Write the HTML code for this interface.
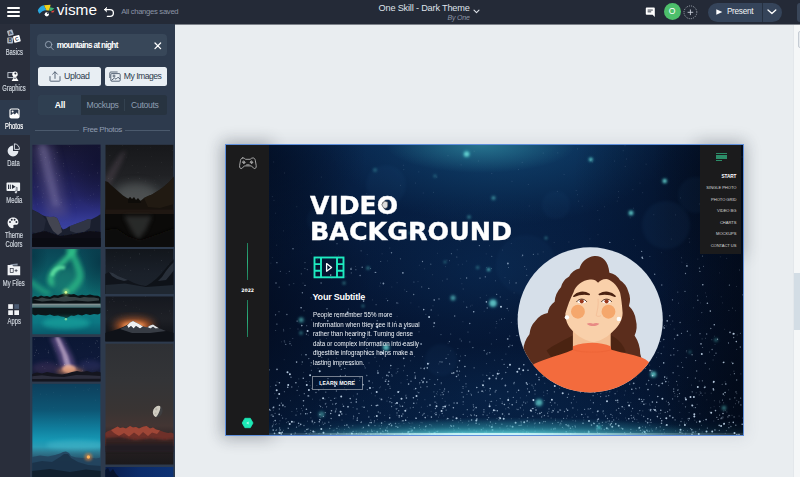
<!DOCTYPE html>
<html lang="en">
<head>
<meta charset="utf-8">
<title>One Skill - Dark Theme</title>
<style>
*{box-sizing:border-box;margin:0;padding:0}
html,body{width:800px;height:477px;overflow:hidden;background:#e9edf0;font-family:"Liberation Sans",sans-serif}
#app{position:relative;width:800px;height:477px;overflow:hidden;background:#e9edf0}
.abs{position:absolute}
/* top bar */
#topbar{position:absolute;left:0;top:0;width:800px;height:25px}
#topbar:before{content:"";position:absolute;left:0;top:0;width:800px;height:24px;background:#242a37}
#topbar .t{position:absolute;white-space:nowrap;line-height:1}
/* sidebar */
#sidebar{position:absolute;left:0;top:24px;width:29.5px;height:453px;background:#292e3b}
.sb{position:absolute;left:-10px;width:48px;text-align:center;-webkit-text-stroke:.2px currentColor;color:#cfd5dd;font-size:9px;line-height:9px}
.sb span{display:inline-block;transform:scaleX(.65);transform-origin:50% 50%;white-space:nowrap}
/* panel */
#panel{position:absolute;left:30px;top:24px;width:145px;height:453px;background:#2d3a4d}
.ph{position:absolute;overflow:hidden;background:#111}
.ph svg{display:block;position:absolute;left:0;top:0;width:100%;height:100%}
/* slide */
#slide{position:absolute;left:225px;top:144px;width:519px;height:292px;background:#05152e;border:1px solid #5f8fdc;box-shadow:0 0 14px 2px rgba(70,80,95,.10);overflow:hidden}
.mn{position:absolute;right:6.6px;font-size:4.1px;line-height:6px;color:#d8d8d8;white-space:nowrap;text-align:right;letter-spacing:-.05px}
</style>
</head>
<body>
<div id="app">

<!-- CANVAS RIGHT STRIP -->
<div class="abs" style="left:793.5px;top:25px;width:7px;height:452px;background:#f5f7f8"></div>
<div class="abs" style="left:793.5px;top:272.5px;width:7px;height:57px;background:#d3dde5"></div>
<div class="abs" style="left:798px;top:30.7px;width:6px;height:17px;border:1px solid #c5ccd4;border-radius:2px;background:#e6eaee"></div>
<div class="abs" style="left:792.5px;top:25px;width:1px;height:452px;background:#e3e7eb"></div>

<!-- SLIDE -->
<div class="abs" style="left:228px;top:148px;width:38px;height:284px;box-shadow:0 0 16px 6px rgba(40,46,58,.30)"></div>
<div class="abs" style="left:703px;top:148px;width:36px;height:102px;box-shadow:0 0 16px 6px rgba(40,46,58,.26)"></div>
<div id="slide">
  <!--SLIDEBG--><svg class="abs" style="left:0;top:0" width="517" height="290" viewBox="0 0 517 290"><defs><filter id="sb1" x="-60%" y="-60%" width="220%" height="220%"><feGaussianBlur stdDeviation=".8"/></filter><filter id="sb2" x="-60%" y="-60%" width="220%" height="220%"><feGaussianBlur stdDeviation="1.6"/></filter><filter id="sb3" x="-60%" y="-60%" width="220%" height="220%"><feGaussianBlur stdDeviation="3"/></filter><filter id="sb8" x="-60%" y="-60%" width="220%" height="220%"><feGaussianBlur stdDeviation="8"/></filter><linearGradient id="sg0" x1="0" y1="0" x2="0" y2="1"><stop offset="0" stop-color="#08244a"/><stop offset=".3" stop-color="#061c3e"/><stop offset=".6" stop-color="#051634"/><stop offset=".85" stop-color="#051938"/><stop offset="1" stop-color="#061e40"/></linearGradient><radialGradient id="sgA" cx=".5" cy=".5" r=".5"><stop offset="0" stop-color="#124a76" stop-opacity="0.8"/><stop offset="1" stop-color="#124a76" stop-opacity="0"/></radialGradient><radialGradient id="sgB" cx=".5" cy=".5" r=".5"><stop offset="0" stop-color="#2a7c94" stop-opacity="0.85"/><stop offset="1" stop-color="#2a7c94" stop-opacity="0"/></radialGradient><radialGradient id="sgC" cx=".5" cy=".5" r=".5"><stop offset="0" stop-color="#0b2f5a" stop-opacity="0.5"/><stop offset="1" stop-color="#0b2f5a" stop-opacity="0"/></radialGradient><radialGradient id="sgD" cx=".5" cy=".5" r=".5"><stop offset="0" stop-color="#020a1c" stop-opacity="0.9"/><stop offset="1" stop-color="#020a1c" stop-opacity="0"/></radialGradient><linearGradient id="sgR" x1="0" y1="0" x2="1" y2="0"><stop offset="0" stop-color="#020814" stop-opacity="0"/><stop offset="1" stop-color="#020814" stop-opacity=".7"/></linearGradient><filter id="sbp" x="0" y="0" width="100%" height="100%" filterUnits="userSpaceOnUse"><feGaussianBlur stdDeviation=".35"/></filter><linearGradient id="sgG" x1="0" y1="0" x2="0" y2="1"><stop offset="0" stop-color="#1f7a90" stop-opacity="0"/><stop offset=".5" stop-color="#258c9e" stop-opacity=".35"/><stop offset=".82" stop-color="#4fbcc8" stop-opacity=".8"/><stop offset="1" stop-color="#a8ecf0" stop-opacity="1"/></linearGradient><linearGradient id="sgGm" x1="0" y1="0" x2="1" y2="0"><stop offset="0" stop-color="#fff" stop-opacity=".06"/><stop offset=".15" stop-color="#fff" stop-opacity=".14"/><stop offset=".3" stop-color="#fff" stop-opacity=".5"/><stop offset=".45" stop-color="#fff" stop-opacity=".95"/><stop offset=".56" stop-color="#fff" stop-opacity="1"/><stop offset=".7" stop-color="#fff" stop-opacity=".6"/><stop offset=".85" stop-color="#fff" stop-opacity=".25"/><stop offset="1" stop-color="#fff" stop-opacity=".1"/></linearGradient><mask id="sgM"><rect x="0" y="268" width="517" height="22" fill="url(#sgGm)"/></mask><radialGradient id="sgE" cx=".5" cy=".5" r=".5"><stop offset="0" stop-color="#3fb4c4" stop-opacity="0.7"/><stop offset="1" stop-color="#3fb4c4" stop-opacity="0"/></radialGradient></defs><rect width="517" height="290" fill="url(#sg0)"/>
<ellipse cx="275" cy="-8" rx="175" ry="88" fill="url(#sgA)"/>
<ellipse cx="255" cy="0" rx="95" ry="28" fill="url(#sgB)"/>
<ellipse cx="260" cy="125" rx="125" ry="75" fill="url(#sgC)"/>
<ellipse cx="270" cy="250" rx="150" ry="50" fill="url(#sgC)" opacity=".7"/>
<ellipse cx="517" cy="40" rx="170" ry="160" fill="url(#sgD)"/>
<ellipse cx="517" cy="260" rx="140" ry="140" fill="url(#sgD)" opacity=".8"/>
<ellipse cx="20" cy="160" rx="125" ry="210" fill="url(#sgD)" opacity=".9"/>
<ellipse cx="25" cy="10" rx="115" ry="110" fill="url(#sgD)" opacity=".85"/>
<rect x="427" y="0" width="90" height="290" fill="url(#sgR)"/>
<circle cx="440" cy="80" r="24" fill="#3a78b0" opacity="0.07" filter="url(#sb2)"/>
<circle cx="470" cy="50" r="18" fill="#3a78b0" opacity="0.06" filter="url(#sb2)"/>
<circle cx="300" cy="120" r="30" fill="#3a78b0" opacity="0.05" filter="url(#sb2)"/>
<circle cx="160" cy="40" r="20" fill="#3a78b0" opacity="0.06" filter="url(#sb2)"/>
<circle cx="215" cy="215" r="16" fill="#3a78b0" opacity="0.06" filter="url(#sb2)"/>
<circle cx="95" cy="75" r="14" fill="#3a78b0" opacity="0.05" filter="url(#sb2)"/>
<circle cx="395" cy="150" r="20" fill="#3a78b0" opacity="0.05" filter="url(#sb2)"/>
<circle cx="330" cy="60" r="14" fill="#3a78b0" opacity="0.05" filter="url(#sb2)"/>
<circle cx="240.6" cy="9.0" r="3.9" fill="#3fd0d0" opacity="0.24" filter="url(#sb2)"/>
<circle cx="240.6" cy="9.0" r="2.6" fill="#6fe0dc" opacity="0.80" filter="url(#sb1)"/>
<circle cx="364.8" cy="14.5" r="2.7" fill="#3fd0d0" opacity="0.22" filter="url(#sb2)"/>
<circle cx="364.8" cy="14.5" r="1.8" fill="#6fe0dc" opacity="0.75" filter="url(#sb1)"/>
<circle cx="438.7" cy="36.0" r="3.0" fill="#3fd0d0" opacity="0.24" filter="url(#sb2)"/>
<circle cx="438.7" cy="36.0" r="2.0" fill="#6fe0dc" opacity="0.80" filter="url(#sb1)"/>
<circle cx="405.0" cy="68.0" r="3.3" fill="#3fd0d0" opacity="0.22" filter="url(#sb2)"/>
<circle cx="405.0" cy="68.0" r="2.2" fill="#6fe0dc" opacity="0.75" filter="url(#sb1)"/>
<circle cx="267.5" cy="53.0" r="2.7" fill="#3fd0d0" opacity="0.14" filter="url(#sb2)"/>
<circle cx="267.5" cy="53.0" r="1.8" fill="#6fe0dc" opacity="0.45" filter="url(#sb1)"/>
<circle cx="243.0" cy="72.0" r="2.4" fill="#3fd0d0" opacity="0.12" filter="url(#sb2)"/>
<circle cx="243.0" cy="72.0" r="1.6" fill="#6fe0dc" opacity="0.40" filter="url(#sb1)"/>
<circle cx="262.6" cy="124.6" r="2.2" fill="#3fd0d0" opacity="0.20" filter="url(#sb2)"/>
<circle cx="262.6" cy="124.6" r="1.5" fill="#6fe0dc" opacity="0.65" filter="url(#sb1)"/>
<circle cx="251.6" cy="122.4" r="2.2" fill="#3fd0d0" opacity="0.09" filter="url(#sb2)"/>
<circle cx="251.6" cy="122.4" r="1.5" fill="#6fe0dc" opacity="0.30" filter="url(#sb1)"/>
<circle cx="267.0" cy="158.2" r="5.1" fill="#3fd0d0" opacity="0.22" filter="url(#sb2)"/>
<circle cx="267.0" cy="158.2" r="3.4" fill="#6fe0dc" opacity="0.75" filter="url(#sb1)"/>
<circle cx="227.0" cy="153.0" r="3.6" fill="#3fd0d0" opacity="0.15" filter="url(#sb2)"/>
<circle cx="227.0" cy="153.0" r="2.4" fill="#6fe0dc" opacity="0.50" filter="url(#sb1)"/>
<circle cx="75.2" cy="175.0" r="3.6" fill="#3fd0d0" opacity="0.14" filter="url(#sb2)"/>
<circle cx="75.2" cy="175.0" r="2.4" fill="#6fe0dc" opacity="0.45" filter="url(#sb1)"/>
<circle cx="75.0" cy="188.0" r="2.5" fill="#3fd0d0" opacity="0.10" filter="url(#sb2)"/>
<circle cx="75.0" cy="188.0" r="1.7" fill="#6fe0dc" opacity="0.35" filter="url(#sb1)"/>
<circle cx="160.0" cy="202.5" r="4.2" fill="#3fd0d0" opacity="0.21" filter="url(#sb2)"/>
<circle cx="160.0" cy="202.5" r="2.8" fill="#6fe0dc" opacity="0.70" filter="url(#sb1)"/>
<circle cx="95.6" cy="269.2" r="4.2" fill="#3fd0d0" opacity="0.10" filter="url(#sb2)"/>
<circle cx="95.6" cy="269.2" r="2.8" fill="#6fe0dc" opacity="0.35" filter="url(#sb1)"/>
<circle cx="427.4" cy="229.3" r="3.9" fill="#3fd0d0" opacity="0.21" filter="url(#sb2)"/>
<circle cx="427.4" cy="229.3" r="2.6" fill="#6fe0dc" opacity="0.70" filter="url(#sb1)"/>
<circle cx="313.0" cy="257.6" r="4.8" fill="#3fd0d0" opacity="0.20" filter="url(#sb2)"/>
<circle cx="313.0" cy="257.6" r="3.2" fill="#6fe0dc" opacity="0.65" filter="url(#sb1)"/>
<circle cx="372.7" cy="282.4" r="2.5" fill="#3fd0d0" opacity="0.26" filter="url(#sb2)"/>
<circle cx="372.7" cy="282.4" r="1.7" fill="#6fe0dc" opacity="0.85" filter="url(#sb1)"/>
<circle cx="498.0" cy="263.0" r="3.3" fill="#3fd0d0" opacity="0.10" filter="url(#sb2)"/>
<circle cx="498.0" cy="263.0" r="2.2" fill="#6fe0dc" opacity="0.35" filter="url(#sb1)"/>
<circle cx="142.0" cy="123.0" r="2.2" fill="#3fd0d0" opacity="0.12" filter="url(#sb2)"/>
<circle cx="142.0" cy="123.0" r="1.5" fill="#6fe0dc" opacity="0.40" filter="url(#sb1)"/>
<circle cx="118.0" cy="138.0" r="2.2" fill="#3fd0d0" opacity="0.10" filter="url(#sb2)"/>
<circle cx="118.0" cy="138.0" r="1.5" fill="#6fe0dc" opacity="0.35" filter="url(#sb1)"/>
<circle cx="137.0" cy="161.0" r="2.0" fill="#3fd0d0" opacity="0.10" filter="url(#sb2)"/>
<circle cx="137.0" cy="161.0" r="1.3" fill="#6fe0dc" opacity="0.35" filter="url(#sb1)"/>
<circle cx="184.0" cy="88.0" r="2.0" fill="#3fd0d0" opacity="0.10" filter="url(#sb2)"/>
<circle cx="184.0" cy="88.0" r="1.3" fill="#6fe0dc" opacity="0.35" filter="url(#sb1)"/>
<circle cx="219.0" cy="117.0" r="2.0" fill="#3fd0d0" opacity="0.09" filter="url(#sb2)"/>
<circle cx="219.0" cy="117.0" r="1.3" fill="#6fe0dc" opacity="0.30" filter="url(#sb1)"/>
<circle cx="490.0" cy="195.0" r="2.7" fill="#3fd0d0" opacity="0.09" filter="url(#sb2)"/>
<circle cx="490.0" cy="195.0" r="1.8" fill="#6fe0dc" opacity="0.30" filter="url(#sb1)"/>
<circle cx="464.0" cy="207.0" r="2.2" fill="#3fd0d0" opacity="0.07" filter="url(#sb2)"/>
<circle cx="464.0" cy="207.0" r="1.5" fill="#6fe0dc" opacity="0.25" filter="url(#sb1)"/>
<circle cx="149.0" cy="25.0" r="2.7" fill="#3fd0d0" opacity="0.07" filter="url(#sb2)"/>
<circle cx="149.0" cy="25.0" r="1.8" fill="#6fe0dc" opacity="0.25" filter="url(#sb1)"/>
<circle cx="209.0" cy="31.0" r="2.2" fill="#3fd0d0" opacity="0.07" filter="url(#sb2)"/>
<circle cx="209.0" cy="31.0" r="1.5" fill="#6fe0dc" opacity="0.25" filter="url(#sb1)"/>
<circle cx="320.0" cy="93.0" r="2.0" fill="#3fd0d0" opacity="0.10" filter="url(#sb2)"/>
<circle cx="320.0" cy="93.0" r="1.3" fill="#6fe0dc" opacity="0.35" filter="url(#sb1)"/>
<g filter="url(#sbp)">
<path d="M307.0 263.5h0M250.1 262.6h0M231.0 226.0h0M497.0 268.5h0M140.0 290.0h0M340.2 286.7h0M163.2 279.4h0M493.2 280.4h0M162.6 236.3h0M48.5 288.4h0M391.6 255.2h0M375.7 231.2h0M80.0 209.8h0M120.9 280.0h0M250.8 242.5h0M424.5 265.2h0M187.4 252.8h0M227.7 227.9h0M459.4 253.0h0M384.4 279.9h0M70.6 217.1h0M199.8 281.6h0M221.8 273.6h0M139.3 188.5h0M231.1 258.1h0M101.8 175.9h0M292.6 245.2h0M426.6 230.6h0M190.2 273.3h0M516.2 279.2h0M86.3 276.8h0M365.5 280.1h0M260.4 156.9h0M466.0 289.3h0M395.1 183.4h0M233.5 215.8h0M371.4 196.8h0M374.5 244.8h0M159.7 285.4h0M226.0 228.2h0M75.1 162.8h0M465.8 284.7h0M507.3 277.4h0M337.5 217.1h0M182.6 239.1h0M488.3 179.7h0M297.8 219.8h0M124.2 253.6h0M350.6 140.7h0M300.8 287.1h0M145.2 277.6h0M358.0 213.0h0M437.7 217.9h0M217.2 261.8h0M40.7 225.3h0M238.9 221.5h0M513.0 289.5h0M198.2 233.4h0M405.8 244.2h0M283.0 269.1h0M197.0 237.4h0M104.7 130.1h0M177.7 213.4h0M313.6 277.9h0M368.8 247.0h0M310.0 265.0h0M72.6 278.2h0M357.5 140.6h0M310.4 229.6h0M467.0 287.2h0M54.8 287.9h0M480.1 274.6h0M122.0 261.9h0M189.3 233.1h0M357.0 278.2h0M355.8 269.5h0M250.1 278.2h0M313.1 234.8h0M82.2 250.9h0M436.4 238.4h0M154.8 288.2h0M321.7 202.1h0M227.4 262.7h0M79.7 268.7h0M205.6 289.0h0M435.7 275.8h0M205.4 272.1h0M499.8 239.0h0M255.4 284.7h0M117.5 261.2h0M199.2 272.6h0M421.8 273.7h0M300.4 237.9h0M211.2 286.6h0M426.4 257.0h0M230.5 231.5h0M159.5 236.2h0M173.2 270.8h0M137.6 156.1h0M151.7 260.3h0M487.3 243.9h0M421.6 277.8h0M302.0 225.2h0M225.4 281.2h0M340.1 279.8h0M242.6 246.1h0M176.7 199.3h0M431.4 271.6h0M160.9 230.4h0M47.5 262.2h0M89.8 206.3h0M332.0 267.0h0M346.7 141.0h0M93.3 276.7h0M286.2 259.7h0M303.3 246.9h0M75.8 180.6h0M313.9 268.4h0M150.3 260.6h0M186.2 285.3h0M404.8 157.5h0M478.5 242.5h0M481.4 158.2h0M55.2 288.9h0M47.1 271.3h0M361.6 233.0h0M77.5 255.8h0M210.0 269.6h0M104.7 268.5h0M201.3 222.9h0M267.0 230.5h0M402.8 273.7h0M180.4 253.0h0M80.4 264.3h0M435.5 278.2h0M142.6 280.4h0M506.8 218.4h0M371.2 280.9h0M453.9 287.3h0M197.7 164.6h0M499.1 247.5h0M56.9 260.6h0M487.6 244.9h0M130.3 257.0h0M431.8 251.5h0M208.2 155.0h0M188.4 282.9h0M80.9 284.5h0M53.4 237.7h0M200.8 237.1h0M434.8 265.2h0M143.1 236.1h0M69.9 237.7h0M463.1 273.6h0M416.2 256.5h0M131.2 275.2h0M187.8 258.2h0M247.7 166.7h0M74.7 279.4h0M385.4 215.9h0M56.3 287.4h0M163.7 272.9h0M278.4 259.5h0M77.3 233.3h0M53.5 288.3h0M327.0 207.6h0M179.7 275.3h0M373.6 222.5h0M227.6 281.0h0M497.3 249.1h0M259.1 288.4h0M301.3 239.3h0M327.8 284.0h0M176.9 127.9h0M327.2 265.8h0M264.2 243.6h0M443.9 270.9h0M420.9 285.3h0M344.4 283.3h0M161.5 286.1h0M344.7 288.7h0M198.2 223.6h0M510.9 289.9h0M115.8 269.0h0M125.0 124.1h0M383.4 244.0h0M489.5 265.6h0M47.2 285.1h0M385.3 278.5h0M164.8 220.6h0M250.9 274.1h0M137.2 239.8h0M323.9 164.3h0M204.0 260.1h0M417.9 259.2h0M430.7 257.2h0M389.8 278.8h0M484.3 166.1h0M155.6 278.1h0M396.2 261.8h0M441.2 175.9h0M438.7 232.1h0M371.6 266.4h0M49.9 240.3h0M497.8 217.4h0M42.2 270.1h0M183.9 289.4h0M175.7 271.1h0M396.7 283.9h0M290.9 288.2h0M197.1 236.8h0M177.0 275.8h0M367.8 278.4h0M476.8 139.7h0M422.0 244.6h0M53.5 260.3h0M438.2 183.0h0M245.6 275.0h0M401.1 137.3h0M105.5 265.7h0M171.8 282.3h0M163.1 227.3h0M435.3 171.4h0M250.4 270.7h0M301.1 276.1h0M162.1 239.3h0M65.2 289.3h0M165.6 280.4h0M439.8 236.6h0M61.7 242.2h0M151.2 286.9h0M510.3 196.6h0M372.4 274.1h0M341.6 265.3h0M189.7 243.6h0M504.0 187.4h0M49.2 275.6h0M432.9 240.7h0M276.5 269.0h0M138.1 262.3h0M84.6 267.5h0M271.3 265.8h0M53.2 269.4h0M93.8 274.7h0M176.5 261.3h0" stroke="#d2e6fa" stroke-width="1.60" stroke-linecap="round" opacity="0.68" fill="none"/>
<path d="M282.2 262.4h0M284.2 281.0h0M426.2 285.8h0M345.4 257.8h0M124.8 219.8h0M131.0 263.9h0M217.3 249.5h0M270.7 149.3h0M446.6 253.9h0M168.4 289.3h0M507.7 192.5h0M270.0 245.5h0M207.8 181.5h0M455.5 188.3h0M451.9 221.2h0M222.4 246.8h0M78.3 248.7h0M317.1 231.6h0M326.8 288.7h0M373.1 278.5h0M183.6 289.5h0M223.4 196.6h0M105.0 273.3h0M444.8 210.2h0M338.5 266.5h0M59.8 199.3h0M104.8 289.2h0M62.4 283.3h0M340.5 264.0h0M497.2 217.5h0M265.2 289.5h0M288.2 237.4h0M102.0 233.6h0M261.2 163.0h0M250.3 286.2h0M110.9 283.3h0M440.7 233.4h0M145.6 286.0h0M387.7 274.9h0M442.4 257.4h0M290.1 137.9h0M295.6 280.1h0M274.2 253.6h0M297.0 287.0h0M100.6 261.8h0M469.6 215.6h0M131.3 273.2h0M90.0 247.5h0M293.0 280.3h0M237.2 269.3h0M137.4 282.3h0M154.2 283.7h0M95.1 138.0h0M279.8 227.5h0M303.1 288.3h0M262.7 272.6h0M392.7 263.4h0M118.7 280.4h0M450.6 236.3h0M326.0 267.2h0M233.5 226.2h0M203.0 286.8h0M209.6 289.5h0M201.1 241.7h0M50.9 117.7h0M162.4 230.9h0M514.7 253.1h0M76.3 217.0h0M240.7 162.2h0M358.6 264.3h0M317.7 276.6h0M309.5 239.2h0M242.8 276.1h0M362.6 286.0h0M218.0 246.1h0M203.9 279.6h0M216.0 217.0h0M301.7 272.7h0M309.1 286.2h0M141.7 286.5h0M184.9 286.2h0M378.3 284.5h0M133.0 268.4h0M299.6 258.1h0M79.0 286.1h0M80.4 189.1h0M395.7 283.2h0M501.9 271.9h0M296.3 260.1h0M476.4 235.8h0M345.4 150.7h0M422.7 235.5h0M109.7 266.0h0M258.8 287.2h0M188.7 227.7h0M496.5 255.1h0M223.6 218.9h0M286.2 200.5h0M185.8 286.5h0M211.6 234.7h0M228.1 285.1h0M435.8 140.0h0M219.9 289.5h0M309.1 278.1h0M227.1 271.9h0M135.4 277.0h0M490.8 272.4h0M439.2 267.4h0M243.7 178.5h0M198.1 268.5h0M231.1 289.3h0M416.7 113.4h0M470.7 226.0h0M510.7 235.0h0M156.7 286.2h0M307.5 255.5h0M165.8 257.7h0M264.1 249.7h0M447.9 209.8h0M290.4 257.2h0M469.4 233.1h0M371.5 287.7h0M210.0 267.7h0M487.3 237.6h0M292.0 264.5h0M413.5 242.8h0M443.3 259.0h0M118.8 223.4h0M145.5 260.4h0M56.9 259.6h0M247.3 259.8h0M311.4 185.3h0M257.2 283.1h0M508.1 271.9h0M232.3 288.2h0M203.7 287.3h0M127.6 271.2h0M187.2 262.3h0M74.7 268.8h0M405.2 270.4h0M407.6 272.7h0M112.0 288.2h0M189.0 288.6h0M104.9 255.4h0M386.1 276.7h0M340.7 288.9h0M151.9 200.8h0M374.6 251.6h0M70.0 270.1h0M276.4 287.5h0M164.9 253.3h0M263.8 280.9h0M213.0 153.9h0M408.0 164.4h0M236.0 247.3h0M149.0 280.6h0M40.4 278.2h0M154.2 268.0h0M301.5 243.8h0M381.5 273.5h0M336.5 282.4h0M88.8 286.9h0M160.1 234.6h0M435.2 208.6h0M377.2 266.0h0M46.5 281.0h0M240.0 238.8h0M176.4 288.1h0M226.8 275.3h0M159.9 170.7h0M108.5 253.3h0M148.5 275.9h0M127.1 286.4h0M453.7 280.1h0M302.6 287.4h0M514.3 202.0h0M493.3 285.3h0M216.2 268.4h0M214.0 216.8h0M140.8 230.5h0M44.5 265.2h0M193.4 267.3h0M141.3 244.6h0M448.5 193.8h0M369.1 210.1h0M326.5 278.5h0M55.4 258.1h0M323.0 263.9h0M112.5 172.0h0M189.3 231.1h0M455.0 287.1h0M425.0 277.3h0M415.5 254.4h0M134.0 232.8h0M370.9 284.0h0M257.9 266.9h0M205.2 165.0h0M394.5 268.4h0M70.6 263.8h0M371.5 274.7h0M160.0 190.7h0M384.9 269.4h0M341.9 289.0h0M350.0 212.4h0M260.5 287.0h0M349.5 282.0h0M295.6 271.0h0M99.4 258.9h0M82.1 283.9h0M306.2 263.6h0M502.8 282.6h0M430.4 282.7h0M114.7 235.1h0M273.2 272.5h0M491.5 194.2h0M244.8 269.8h0M245.3 270.5h0M419.5 276.1h0M416.0 214.7h0M239.6 231.2h0M437.8 284.6h0M495.0 273.7h0M140.7 177.6h0M220.1 265.1h0M275.5 174.1h0M119.4 230.3h0M322.1 271.1h0M318.5 270.5h0M196.5 116.5h0M164.6 278.3h0M220.1 213.4h0M334.6 265.1h0M473.9 126.4h0M373.2 288.4h0M295.2 280.2h0M404.9 284.3h0M480.7 189.0h0M493.6 270.1h0M449.1 274.9h0M102.8 277.2h0M447.7 203.6h0M390.1 255.5h0M216.7 263.5h0M281.2 163.5h0M488.6 284.9h0M508.8 252.8h0M414.4 204.9h0M209.0 257.1h0M376.3 280.3h0M77.5 260.7h0M503.9 254.1h0M49.6 169.8h0M367.1 250.7h0M287.9 238.7h0M319.3 276.6h0M361.9 272.0h0M160.9 282.9h0M164.1 243.3h0M143.9 277.7h0M176.9 269.0h0M104.7 280.6h0M297.7 257.1h0M259.3 131.8h0M122.5 282.2h0M278.1 219.4h0M216.2 247.6h0M317.1 195.3h0M86.2 275.3h0M306.8 271.2h0M341.4 252.4h0M277.3 285.9h0M470.6 277.1h0M420.4 239.2h0M50.9 179.1h0M417.7 271.5h0M484.8 183.5h0M99.8 247.1h0M456.7 222.3h0M344.9 163.6h0M409.8 243.3h0M349.0 280.9h0M173.2 272.2h0M265.6 256.3h0M135.0 277.4h0M209.5 287.6h0M345.1 159.1h0M152.3 267.0h0M98.2 149.4h0M403.7 239.1h0M111.7 287.4h0M383.3 276.0h0M405.8 273.1h0M257.8 236.1h0M371.3 276.2h0M243.0 284.0h0M232.2 230.0h0M446.5 154.8h0M282.7 201.7h0M377.8 221.1h0M248.4 270.0h0M337.6 273.3h0M408.6 274.1h0M459.5 261.8h0M231.5 222.2h0M181.3 230.6h0M352.8 158.4h0M321.6 268.2h0M396.1 226.9h0M376.4 277.3h0M194.9 223.2h0M170.9 157.9h0M466.2 246.8h0M424.5 275.0h0M329.0 283.1h0M512.8 256.8h0M183.3 286.6h0M211.0 275.9h0M218.7 288.9h0M166.1 230.9h0M140.8 203.6h0M427.5 264.3h0M202.8 143.4h0M50.0 285.3h0M170.1 281.5h0M193.8 237.7h0M263.8 207.7h0M354.5 247.1h0M263.5 259.1h0M419.9 288.6h0M366.1 210.4h0M503.2 277.5h0M92.8 245.1h0M469.5 262.6h0M253.2 279.2h0M315.6 271.9h0M144.9 289.2h0M496.9 272.1h0M343.0 281.0h0M60.9 169.5h0M128.4 234.8h0M223.2 260.2h0M130.4 288.5h0M335.6 208.3h0M59.0 261.7h0M232.6 283.2h0M131.3 248.9h0M134.8 206.8h0M71.1 245.3h0M269.7 278.4h0M486.1 204.5h0M260.8 230.4h0M313.0 232.3h0M93.9 269.5h0M70.5 282.2h0M97.4 271.4h0M461.7 232.6h0M451.7 251.6h0M165.6 261.5h0M329.5 283.8h0M178.4 220.8h0M464.7 283.6h0M139.4 180.6h0M192.8 247.7h0M106.7 259.1h0M372.2 266.0h0M434.2 281.8h0M504.9 281.5h0M375.2 283.9h0M407.2 248.2h0M502.5 198.0h0M218.6 244.0h0M172.7 265.7h0M417.9 286.5h0M256.2 289.3h0M56.6 273.1h0M454.1 177.5h0M348.0 227.6h0M237.2 256.8h0M368.7 235.1h0M187.7 149.5h0M40.5 218.4h0M406.7 276.3h0M237.0 241.6h0M294.2 280.3h0M474.0 188.7h0M257.9 264.7h0M257.1 269.7h0M195.7 235.3h0M105.4 273.6h0M209.4 263.5h0M179.5 275.2h0M157.1 286.7h0M236.7 287.7h0M54.1 284.6h0M414.6 285.3h0M386.2 191.3h0M294.4 262.8h0M398.7 287.6h0M273.3 228.3h0M170.4 264.0h0M199.1 284.9h0M247.6 261.8h0M346.9 262.9h0M503.4 140.1h0M169.4 258.7h0M194.7 242.2h0M69.2 288.0h0M362.2 263.9h0M215.3 237.9h0M469.3 286.9h0M364.6 263.6h0M389.1 248.7h0M65.8 242.0h0M358.6 183.5h0M47.0 262.9h0M451.7 245.2h0M510.0 246.9h0M171.0 267.9h0M325.2 284.2h0M273.0 274.8h0M374.3 225.3h0M115.3 224.3h0M82.8 213.6h0M382.1 284.0h0M430.4 194.2h0M53.3 264.0h0M95.6 240.1h0M237.3 252.0h0M508.4 228.7h0M53.6 283.0h0M434.5 273.4h0M54.1 285.2h0M64.0 198.7h0M333.9 265.0h0M41.7 220.8h0M174.2 261.1h0M371.0 285.9h0M423.3 286.2h0M94.6 261.5h0M103.8 283.5h0M425.6 239.6h0M404.6 287.5h0M169.6 176.8h0M109.5 259.0h0M430.1 266.2h0M258.2 205.5h0M416.4 287.5h0M109.3 266.9h0M453.5 248.6h0M348.3 251.3h0M135.3 287.8h0M490.0 208.2h0M62.2 276.8h0M474.9 248.1h0M452.1 244.8h0M443.8 264.9h0M328.9 257.9h0M306.0 240.1h0M98.9 278.2h0M287.3 252.4h0M78.0 280.5h0M346.5 281.7h0M269.2 246.9h0M261.3 274.6h0M389.8 279.3h0M334.0 128.2h0M390.4 265.1h0M514.9 259.9h0M382.7 250.6h0M248.1 222.8h0M342.5 249.2h0M375.6 240.5h0M124.5 193.5h0M473.4 123.1h0M297.2 284.7h0M417.9 254.6h0M495.4 272.8h0M349.1 287.9h0M241.3 264.7h0M335.7 276.1h0M380.0 277.1h0M455.0 276.5h0M315.5 267.4h0M447.7 244.0h0M281.1 280.9h0M368.5 278.7h0M80.2 288.4h0M110.2 264.0h0M252.3 247.2h0M406.6 263.5h0M99.3 267.6h0M43.2 224.8h0M110.2 258.4h0M245.5 250.0h0M413.8 265.6h0M492.2 274.4h0M114.4 230.9h0M46.0 269.8h0M151.7 225.9h0M327.9 219.1h0M324.3 257.3h0M309.0 245.5h0M441.6 266.7h0M369.1 224.9h0M88.8 277.5h0M332.1 277.4h0M189.7 273.1h0M425.9 225.8h0M254.0 133.1h0M305.6 266.2h0M68.0 277.0h0M380.1 251.2h0M384.6 168.5h0M447.7 246.5h0M264.4 277.0h0M391.8 257.2h0M330.2 187.7h0M125.1 239.4h0M379.7 270.8h0M459.5 128.5h0M196.5 270.1h0M110.4 246.0h0M334.4 278.2h0M295.2 277.8h0M276.3 233.5h0M281.5 222.4h0M389.6 255.4h0M122.0 261.4h0M459.0 146.3h0M297.3 165.5h0M248.1 285.1h0" stroke="#d2e6fa" stroke-width="1.30" stroke-linecap="round" opacity="0.50" fill="none"/>
<path d="M84.9 220.7h0M333.6 243.3h0M292.0 289.3h0M155.4 280.7h0M258.1 242.2h0M377.6 209.3h0M177.9 278.5h0M507.6 262.1h0M81.6 276.2h0M401.6 143.6h0M88.2 277.6h0M347.1 283.8h0M141.5 266.0h0M423.2 134.3h0M140.5 194.9h0M346.2 205.2h0M181.3 272.4h0M318.0 285.8h0M127.2 201.4h0M430.1 184.8h0M241.0 249.3h0M499.2 288.3h0M180.0 250.1h0M72.8 233.9h0M477.6 275.5h0M124.1 287.3h0M102.8 252.6h0M318.8 238.3h0M499.2 236.9h0M516.7 273.1h0M387.4 196.8h0M479.1 248.1h0M357.6 272.6h0M172.0 158.2h0M171.3 263.6h0M75.6 263.5h0M435.8 288.9h0M266.6 280.2h0M169.9 281.3h0M474.1 246.8h0M382.3 244.8h0M417.2 256.1h0M448.2 184.1h0M272.5 225.7h0M480.5 151.7h0M132.6 289.0h0M193.6 238.9h0M283.5 284.2h0M448.7 248.4h0M416.8 265.9h0M366.8 267.3h0M73.7 280.8h0M109.9 253.0h0M85.4 174.9h0M326.6 265.3h0M442.7 236.9h0M423.9 111.5h0M294.3 252.9h0M133.2 287.7h0M265.0 282.3h0M331.5 259.9h0M214.4 249.9h0M307.4 243.2h0M181.2 234.5h0M60.4 277.6h0M327.9 215.3h0M257.4 246.9h0M291.9 287.6h0M390.3 155.8h0M211.3 246.8h0M399.3 245.9h0M58.8 197.2h0M298.4 285.2h0M75.5 209.8h0M242.4 279.5h0M244.0 178.4h0M457.5 285.5h0M175.0 237.9h0M386.3 270.5h0M423.1 264.6h0M158.4 190.9h0M213.3 270.0h0M174.3 196.4h0M404.8 257.6h0M120.0 269.3h0M187.1 287.3h0M410.1 244.1h0M57.4 184.4h0M143.7 281.0h0M323.7 234.4h0M174.1 281.0h0M268.7 215.2h0M476.1 193.9h0M153.3 242.8h0M329.1 235.0h0M193.5 282.5h0M295.0 276.4h0M432.1 207.6h0M381.8 276.2h0M449.0 251.1h0M434.2 285.8h0M290.7 255.5h0M188.5 211.5h0M333.9 279.8h0M297.5 269.3h0M107.2 285.7h0M377.9 240.2h0M148.1 285.8h0M234.1 284.2h0M48.8 248.7h0M350.4 271.6h0M331.7 213.3h0M278.7 270.9h0M438.5 234.7h0M339.1 162.5h0M260.9 270.3h0M326.9 215.2h0M301.3 281.0h0M354.0 166.6h0M391.9 241.1h0M423.4 250.6h0M263.2 280.2h0M311.7 268.5h0M346.1 272.2h0M193.0 186.8h0M398.6 250.0h0M73.3 250.4h0M279.8 263.9h0M186.1 278.0h0M424.1 265.9h0M418.0 285.4h0M493.6 256.1h0M182.8 277.7h0M265.4 123.5h0M439.7 280.4h0M341.7 280.1h0M63.9 196.6h0M380.2 200.4h0M146.5 286.4h0M133.7 235.5h0M149.2 250.8h0M358.2 175.0h0M326.1 288.0h0M423.1 277.3h0M400.5 275.2h0M301.4 275.6h0M511.2 190.0h0M398.0 262.8h0M278.5 173.5h0M347.6 254.3h0M493.9 257.7h0M417.4 222.0h0M112.4 281.3h0M420.9 276.6h0M153.5 221.0h0M60.2 273.6h0M290.6 247.3h0M161.6 281.7h0M235.9 287.2h0M502.9 279.3h0M227.4 283.3h0M76.5 265.7h0M390.1 226.6h0M303.2 277.2h0M484.8 262.8h0M412.7 268.9h0M137.1 282.1h0M451.5 240.0h0M170.9 270.2h0M165.1 281.2h0M381.1 176.9h0M49.7 185.5h0M227.9 287.5h0M137.7 283.0h0M233.3 235.1h0M147.8 201.6h0M142.9 271.4h0M505.4 217.2h0M478.4 241.2h0M244.0 285.9h0M222.9 287.3h0M173.5 259.8h0M266.7 267.3h0M154.4 241.9h0M241.4 271.6h0M51.0 237.0h0M195.3 262.2h0M473.9 268.8h0M281.9 283.6h0M506.0 270.3h0M216.3 253.5h0M294.7 229.2h0M195.0 277.4h0M100.1 258.3h0M65.5 200.3h0M419.9 258.8h0M422.2 211.8h0M359.3 269.2h0M502.9 165.5h0M380.2 287.8h0M197.4 284.4h0M270.4 255.6h0M507.9 226.2h0M123.5 283.0h0M194.4 284.4h0M163.8 270.0h0M465.8 287.1h0M424.9 266.4h0M385.8 211.1h0M120.5 288.8h0M285.3 273.7h0M497.6 279.6h0M315.1 289.0h0M84.9 272.9h0M364.5 255.2h0M108.2 285.1h0M399.7 273.0h0M499.2 265.3h0M376.8 266.9h0M127.5 272.9h0M342.8 282.9h0M310.8 259.1h0M240.0 241.8h0M453.8 267.4h0M452.9 256.2h0M347.0 275.6h0M112.4 219.9h0M57.6 285.3h0M437.8 201.9h0M470.2 247.8h0M47.3 265.2h0M340.4 273.3h0M371.4 249.3h0M210.5 248.6h0M391.2 238.2h0M234.7 273.7h0M316.3 278.2h0M236.3 277.7h0M300.4 250.7h0M82.2 190.2h0M261.7 270.2h0M513.5 125.0h0M216.4 279.7h0M393.8 267.9h0M410.2 232.2h0M467.3 162.8h0M416.5 284.8h0M410.9 274.7h0M65.9 266.5h0M237.2 144.0h0M92.6 288.7h0M238.5 287.9h0M471.1 259.4h0M392.7 274.3h0M438.6 287.8h0M301.2 257.0h0M87.3 278.9h0M270.9 273.4h0M272.5 229.1h0M500.9 267.0h0M498.3 250.4h0M216.0 249.9h0M321.2 248.7h0M84.3 287.6h0M231.9 203.5h0M196.5 211.6h0M404.2 287.4h0M316.6 228.5h0M398.5 264.4h0M248.4 263.9h0M390.4 273.0h0M94.0 255.0h0M440.3 256.2h0M265.3 199.0h0M411.4 268.4h0M205.2 280.1h0M162.6 252.4h0M198.9 254.7h0M414.0 285.5h0M158.9 276.5h0M161.0 256.1h0M176.0 276.0h0M456.8 258.7h0M415.5 270.2h0M470.1 286.7h0M456.0 273.7h0M72.4 241.7h0M291.4 286.5h0M183.2 283.6h0M485.2 248.2h0M497.7 257.8h0M425.3 227.7h0M234.4 211.1h0M460.7 278.2h0M198.8 222.6h0M458.3 277.1h0M183.8 278.4h0M278.0 289.4h0M476.2 287.0h0M217.6 263.4h0M487.8 276.0h0M205.8 281.0h0M127.2 273.9h0M146.3 286.3h0M116.5 259.2h0M261.8 207.7h0M506.5 163.1h0M231.1 226.7h0M49.4 279.5h0M127.1 262.5h0M59.8 274.0h0M191.3 247.0h0M259.6 255.8h0M460.7 205.6h0M509.6 258.7h0M385.1 281.8h0M285.3 177.4h0M276.8 289.9h0M502.7 244.9h0M270.0 260.4h0M279.9 209.1h0M422.2 217.0h0M184.7 215.8h0M358.3 287.1h0M455.6 112.8h0M208.6 268.6h0M419.5 282.3h0M190.7 258.1h0M196.2 277.8h0M66.8 193.5h0M333.7 239.7h0M101.3 235.5h0M48.0 261.8h0M263.5 268.2h0M185.1 284.4h0M463.1 267.6h0M351.7 264.9h0M379.5 271.6h0M405.6 266.3h0M145.4 248.2h0M475.4 280.4h0M510.8 255.4h0M276.2 256.9h0M435.2 238.4h0M159.1 170.7h0M266.1 279.2h0M510.8 248.6h0M335.6 278.9h0M121.8 240.3h0M148.0 199.5h0M382.8 278.6h0M318.2 255.5h0M451.3 249.7h0M307.8 275.0h0M158.7 270.4h0M47.7 276.7h0M168.2 250.6h0M237.1 259.5h0M50.6 278.8h0M256.9 230.0h0M438.5 180.5h0M512.4 258.0h0M110.7 289.4h0M317.8 250.6h0M343.8 285.3h0M136.2 283.3h0M432.9 268.8h0M154.4 138.1h0M361.7 180.2h0M153.1 280.9h0M339.5 241.3h0M275.4 234.4h0M197.4 269.6h0M476.3 250.5h0M153.9 253.4h0M384.6 227.0h0M110.5 213.2h0M81.3 268.9h0M93.7 288.3h0M93.5 280.7h0M120.2 245.0h0M219.1 256.3h0M282.3 253.1h0M200.2 280.5h0M320.3 193.8h0M488.3 255.7h0M377.7 268.7h0M473.2 236.0h0M453.0 230.6h0M412.4 283.8h0M173.4 246.4h0M510.7 204.4h0M370.9 270.0h0M40.5 271.8h0M196.6 289.9h0M229.6 273.2h0M334.1 280.0h0M237.5 288.4h0M67.8 138.6h0M149.4 288.9h0M263.4 245.9h0M283.5 258.7h0M423.5 259.0h0M270.8 178.5h0M230.6 287.9h0M111.9 240.2h0M180.8 264.1h0M141.7 193.5h0M270.4 194.5h0M362.0 287.1h0M328.6 264.0h0M199.9 169.4h0M92.1 223.3h0M138.5 221.2h0M264.4 249.3h0M419.2 187.1h0M452.6 158.2h0M191.4 254.7h0M402.2 230.1h0M96.4 262.6h0M213.9 244.5h0M348.7 269.9h0M442.4 240.4h0M159.8 244.7h0M220.5 274.1h0M458.7 278.7h0M136.2 261.8h0M131.4 272.6h0M503.8 270.8h0M425.3 284.1h0M86.4 254.2h0M359.3 223.8h0M433.6 221.6h0M62.5 283.1h0M309.2 262.5h0M461.6 285.7h0M260.6 280.0h0M90.9 240.5h0M487.1 215.0h0M118.5 284.4h0M208.2 284.0h0M61.6 283.1h0M55.5 270.4h0M191.1 288.7h0M222.1 209.6h0M130.1 286.2h0M391.5 225.5h0M423.8 280.2h0M283.2 201.8h0M148.5 271.7h0M309.5 267.5h0M361.7 289.3h0M220.2 260.2h0M181.5 287.7h0M459.3 289.1h0M290.7 264.2h0M473.2 249.9h0M308.6 282.1h0M461.4 273.9h0M171.2 223.9h0M388.9 235.6h0M291.8 169.9h0M201.3 261.3h0M485.8 194.7h0M148.9 212.3h0M513.1 271.1h0M83.3 289.1h0M441.0 232.2h0M165.6 189.7h0M503.1 283.0h0M310.3 214.3h0M260.5 218.6h0M41.8 284.9h0M148.2 277.6h0M201.8 270.8h0M468.0 262.7h0M195.4 289.5h0M185.7 285.5h0M293.2 280.4h0M295.1 276.4h0M393.5 201.4h0M328.4 246.9h0M283.4 137.9h0M223.5 115.7h0M163.9 241.3h0M329.6 274.1h0M479.5 193.3h0M418.3 289.9h0M407.9 271.1h0M117.9 287.2h0M151.3 274.6h0M156.7 232.8h0M64.5 255.7h0M72.0 184.0h0M459.9 288.1h0M209.9 286.2h0M294.9 285.5h0M425.4 264.4h0M156.4 213.9h0M146.6 237.8h0M460.3 206.8h0M42.0 279.7h0M185.0 283.5h0M143.0 217.9h0M260.2 287.0h0M97.2 287.1h0M484.0 266.9h0M47.6 279.9h0M455.6 217.5h0M314.9 289.3h0M329.4 275.5h0M465.4 240.1h0M317.7 154.4h0M188.1 244.2h0M331.2 288.2h0M410.5 285.4h0M170.2 228.1h0M317.7 247.1h0M311.8 269.0h0M53.2 278.8h0M491.6 194.2h0M416.4 281.4h0M172.9 278.6h0M177.6 225.7h0M81.5 268.6h0M307.1 241.6h0M269.4 135.8h0M210.8 258.5h0M449.7 285.9h0M259.4 245.3h0M116.0 275.1h0M423.7 220.1h0M300.6 124.3h0M54.0 275.8h0M442.5 259.9h0M46.1 282.0h0M361.1 183.9h0M268.8 269.5h0M270.3 176.5h0M424.1 260.2h0M83.7 251.0h0M514.9 228.9h0M283.1 263.3h0M347.9 286.1h0M412.1 277.4h0M282.1 284.0h0M368.1 177.9h0M210.0 257.2h0M232.4 277.1h0M274.7 285.1h0M145.7 284.5h0M72.4 281.0h0M244.8 248.9h0M45.0 270.1h0M493.7 261.6h0M280.6 281.4h0M357.9 275.0h0M125.7 199.0h0M317.0 270.9h0M96.5 277.2h0M468.8 275.2h0M223.8 282.6h0M212.6 272.1h0M322.8 266.6h0M399.7 289.7h0M254.2 152.7h0M496.8 273.7h0M78.0 165.8h0M84.1 240.6h0M185.0 281.4h0M94.5 275.1h0M401.5 257.3h0M387.4 285.6h0M274.0 283.4h0M434.5 268.3h0M297.4 265.1h0M363.7 264.2h0M178.5 257.6h0M68.8 289.9h0" stroke="#d2e6fa" stroke-width="1.00" stroke-linecap="round" opacity="0.30" fill="none"/>
<path d="M508.5 288.1h0M392.7 280.7h0M440.3 273.3h0M81.6 185.9h0M507.7 188.7h0M275.0 161.8h0M53.2 249.1h0M440.8 280.0h0M150.7 247.0h0M282.2 254.9h0M61.5 227.3h0M63.9 229.3h0M267.8 265.3h0M289.6 277.7h0M263.4 233.6h0M293.2 223.8h0M230.6 273.2h0M179.3 265.7h0M63.7 279.0h0M171.0 258.1h0M263.6 261.2h0M473.8 276.5h0M125.9 288.6h0M109.0 241.1h0M271.7 228.7h0M277.7 273.8h0M82.9 245.1h0M403.1 260.4h0M113.2 270.3h0M358.0 238.6h0M436.4 253.8h0M485.2 267.8h0M172.2 247.1h0M406.2 212.6h0M363.0 275.9h0M284.0 219.7h0M95.3 283.9h0M257.0 240.3h0M250.3 275.5h0M468.3 271.5h0M328.8 241.1h0M144.0 243.0h0M80.8 239.9h0M50.7 245.2h0M65.9 276.8h0M150.8 271.1h0M97.1 253.3h0M487.8 236.7h0M454.5 284.8h0M418.8 286.9h0M458.9 279.9h0M203.1 172.1h0M380.8 283.3h0M386.5 195.8h0M291.3 226.8h0M151.3 182.2h0M115.2 251.4h0M304.8 265.6h0M178.6 183.3h0M298.2 277.3h0M266.5 285.0h0M190.5 251.0h0M468.3 269.2h0M297.2 225.3h0M208.4 288.0h0M460.0 254.6h0M265.9 282.1h0M374.1 208.1h0M53.3 287.8h0M93.7 226.2h0M464.5 252.1h0M352.8 209.6h0M413.4 282.7h0M210.5 261.2h0M480.5 286.6h0M114.6 266.7h0M467.9 252.0h0M326.7 178.9h0M121.6 167.6h0M219.1 261.6h0M498.1 278.7h0M466.3 260.6h0M408.4 205.7h0M201.9 218.7h0M471.8 241.9h0M87.3 286.5h0M40.7 280.7h0M336.7 248.3h0M215.6 266.0h0M381.0 256.2h0M97.5 287.7h0M386.3 281.8h0M362.8 287.1h0M327.9 117.2h0M495.1 281.0h0M286.6 281.8h0M307.4 255.1h0M84.1 230.2h0M274.2 273.3h0M175.5 253.7h0M429.0 265.0h0M472.8 288.9h0M182.3 286.9h0M325.9 254.7h0M62.2 240.0h0M156.4 207.9h0M475.8 209.1h0M486.2 286.6h0" stroke="#d2e6fa" stroke-width="2.00" stroke-linecap="round" opacity="0.85" fill="none"/>
<path d="M351.4 175.2h0M291.0 178.9h0M381.3 142.8h0M263.6 100.7h0M369.9 194.2h0M350.6 257.1h0M119.1 185.1h0M119.9 131.9h0M357.9 221.1h0M393.1 240.8h0M75.8 219.4h0M93.0 238.1h0M374.5 259.4h0M44.7 241.6h0M496.4 157.9h0M205.1 266.4h0M171.1 137.7h0M303.3 238.5h0M415.0 258.2h0M260.7 150.3h0M137.6 255.8h0M64.1 183.4h0M146.4 154.9h0M395.7 145.9h0M211.1 249.7h0M101.2 217.4h0M350.5 114.1h0M192.9 161.9h0M455.9 117.2h0M507.5 97.3h0M477.6 100.5h0M77.7 227.4h0M293.1 273.7h0M310.1 218.9h0M495.2 151.8h0M97.2 243.2h0M230.4 209.3h0M371.8 123.0h0M430.6 212.4h0M285.3 98.5h0M318.3 137.1h0M122.5 182.9h0M235.9 138.7h0M498.7 184.3h0M153.8 141.1h0M317.2 106.9h0M497.4 266.0h0M337.6 283.4h0M212.2 170.2h0M156.1 108.8h0M269.8 182.8h0M382.5 117.8h0M489.0 199.5h0M279.0 132.6h0M343.4 234.5h0M335.3 136.3h0M264.0 227.8h0M504.4 229.7h0M141.2 109.6h0M480.8 254.8h0M500.7 113.4h0M399.2 215.1h0M88.1 150.1h0M312.2 146.0h0M391.2 246.2h0M488.6 191.2h0M83.5 236.5h0M237.7 156.8h0M333.8 120.4h0M495.8 273.4h0M373.2 139.3h0M463.7 97.2h0M288.1 147.9h0M381.7 245.7h0M207.0 160.8h0M215.2 239.0h0M178.7 144.8h0M314.9 134.2h0M165.8 142.0h0M129.6 121.5h0M48.3 262.8h0M244.5 161.1h0M192.0 136.6h0M391.3 234.5h0M58.2 214.7h0M206.6 129.7h0M231.2 104.8h0M100.3 208.0h0M224.7 205.8h0M380.1 247.4h0M427.6 180.8h0M234.7 133.4h0M391.6 238.2h0M273.3 174.9h0M217.8 270.9h0M296.1 111.6h0M472.3 175.5h0M418.8 140.6h0M246.1 160.2h0M337.0 164.7h0M169.6 263.8h0M150.7 216.4h0M168.1 260.5h0M203.4 218.1h0M138.2 95.8h0M127.3 251.0h0M352.7 212.1h0M509.6 165.7h0M171.1 171.4h0M371.2 139.9h0M283.5 135.8h0M55.4 196.8h0M77.0 138.1h0M444.5 179.6h0M184.9 157.9h0M94.3 272.5h0M118.4 242.8h0M337.2 223.5h0M474.6 157.9h0M422.4 191.6h0M50.7 100.2h0M394.0 142.3h0M354.6 244.6h0M105.8 133.2h0M373.4 283.2h0M216.4 135.8h0M100.5 193.5h0M276.4 105.1h0M479.6 147.9h0M178.7 195.0h0M349.1 150.0h0M160.2 153.6h0M403.3 221.3h0M350.7 178.9h0M476.8 108.4h0M334.4 121.0h0M113.3 284.3h0M212.8 218.9h0M372.7 116.3h0M440.2 181.0h0M510.6 141.5h0M163.8 103.1h0M222.1 198.2h0M263.8 187.9h0M256.1 239.5h0M96.2 278.9h0M236.9 176.7h0M488.1 261.7h0M357.8 184.8h0M465.5 259.8h0M281.1 154.5h0M172.5 223.5h0M342.9 97.0h0M320.0 211.1h0M188.9 288.2h0M417.0 199.2h0M47.2 278.9h0M71.2 266.4h0M183.9 194.5h0M345.1 285.9h0M258.2 166.3h0M165.7 182.1h0M471.8 114.1h0M302.2 148.5h0M282.4 165.7h0M164.8 223.5h0" stroke="#d2e6fa" stroke-width="0.90" stroke-linecap="round" opacity="0.21" fill="none"/>
<path d="M139.2 222.9h0M514.4 188.3h0M483.4 223.9h0M283.7 191.0h0M58.3 195.9h0M126.8 280.7h0M241.9 280.6h0M349.6 275.9h0M389.2 109.3h0M95.8 212.4h0M420.5 129.8h0M446.7 176.0h0M473.4 284.2h0M393.0 112.2h0M402.2 257.3h0M260.3 285.5h0M416.0 219.5h0M358.1 128.4h0M328.3 213.5h0M307.4 109.4h0M215.0 189.6h0M171.7 226.7h0M424.7 274.7h0M265.8 111.3h0M78.9 123.5h0M144.8 275.0h0M134.0 216.4h0M282.5 122.5h0M300.8 130.3h0M144.5 123.5h0M53.2 142.2h0M187.9 137.0h0M338.6 215.4h0M462.5 275.3h0M207.9 246.8h0M122.6 164.0h0M425.8 192.4h0M386.2 272.3h0M355.2 211.2h0M332.6 215.4h0M464.3 190.0h0M84.7 285.4h0M496.2 239.4h0M81.3 124.6h0M98.9 254.0h0M212.1 286.2h0M129.9 124.7h0M309.0 249.0h0M135.1 105.8h0M75.3 128.8h0M325.5 260.3h0M80.7 180.7h0M101.3 216.3h0M174.4 113.8h0M428.1 180.8h0M161.9 208.7h0M80.2 236.5h0M93.7 260.5h0M500.4 285.6h0M63.2 139.8h0M419.5 282.0h0M408.1 153.6h0M430.0 283.9h0M85.1 152.8h0M395.3 203.9h0M476.5 111.1h0M417.1 164.8h0M311.9 109.0h0M377.4 236.1h0M342.6 279.9h0M63.3 126.3h0M276.1 214.6h0M85.7 243.3h0M203.8 234.5h0M307.4 157.4h0M57.7 185.8h0M489.6 284.9h0M150.1 159.7h0M475.8 167.6h0M179.8 250.9h0M516.7 149.8h0M270.8 231.0h0M359.0 247.5h0M204.8 119.2h0M111.0 98.7h0M374.8 248.6h0M483.5 207.0h0M147.0 242.6h0M419.6 223.5h0M418.2 173.7h0M456.2 288.2h0M430.3 239.4h0M54.3 126.3h0M97.6 279.4h0M476.6 202.5h0M49.1 268.4h0M193.4 280.3h0M242.0 187.0h0M369.4 203.6h0M434.6 196.6h0M343.6 193.1h0M125.0 218.1h0M273.9 282.5h0M230.8 112.0h0M506.6 188.9h0M125.3 127.9h0M235.4 195.9h0M363.3 175.3h0M393.9 283.1h0M94.0 194.3h0M221.1 134.0h0M451.8 147.1h0M50.6 284.7h0M314.2 158.4h0M488.3 210.5h0M397.6 167.7h0M429.4 261.8h0M437.4 181.8h0M421.6 286.4h0M211.8 227.3h0M370.9 177.6h0M224.7 189.0h0M85.4 225.3h0M451.8 205.6h0M330.0 130.5h0M284.0 200.0h0M383.8 246.8h0M264.3 256.5h0M79.0 117.6h0M274.3 151.9h0M477.5 121.3h0M315.1 196.4h0M184.3 262.9h0M102.3 214.1h0M298.7 121.5h0M225.4 108.7h0M237.1 243.3h0M58.4 246.7h0M195.7 141.9h0M180.7 146.5h0M154.7 116.5h0M149.0 127.4h0M341.4 270.9h0M141.0 207.3h0M104.1 221.7h0M460.2 212.6h0M234.0 194.0h0M325.1 273.0h0M243.8 196.9h0M471.5 150.8h0M300.1 201.8h0M308.4 278.8h0M53.0 166.7h0M165.7 229.5h0M311.9 145.5h0M234.7 275.4h0M316.5 284.0h0M328.3 246.8h0" stroke="#d2e6fa" stroke-width="1.17" stroke-linecap="round" opacity="0.35" fill="none"/>
<path d="M407.7 238.3h0M335.6 212.5h0M475.0 198.8h0M256.1 246.2h0M416.2 112.5h0M208.3 178.0h0M281.7 193.9h0M424.1 225.4h0M345.3 111.7h0M157.4 138.5h0M451.5 190.2h0M155.5 254.4h0M51.0 224.3h0M460.9 120.9h0M413.3 254.2h0M399.7 192.5h0M446.8 272.6h0M281.9 118.5h0M389.9 157.4h0M270.2 233.5h0M43.2 264.7h0M279.4 240.5h0M152.0 228.0h0M157.0 208.1h0M195.1 199.0h0M404.9 193.7h0" stroke="#d2e6fa" stroke-width="1.80" stroke-linecap="round" opacity="0.59" fill="none"/>
<path d="M228.7 171.0h0M389.5 203.9h0M134.1 130.5h0M79.0 140.4h0M390.1 126.9h0M76.4 147.8h0M169.5 278.5h0M385.4 204.2h0M415.6 106.4h0M391.2 211.2h0M281.8 246.7h0M65.0 232.2h0M85.3 217.7h0M424.6 264.4h0M208.6 251.5h0M369.4 239.6h0M247.3 265.1h0M466.1 209.7h0M471.9 155.2h0M51.3 253.2h0M342.5 281.0h0M351.9 201.5h0M240.6 133.0h0M367.4 257.8h0M437.8 194.5h0M101.0 163.8h0M291.0 190.6h0M228.1 258.0h0M165.5 107.7h0M162.0 288.3h0M428.7 129.3h0M50.0 138.0h0M341.3 280.8h0M338.1 110.1h0M321.3 245.6h0M340.4 223.0h0M509.8 280.3h0M136.2 122.2h0M481.4 283.1h0M503.0 270.5h0M253.4 100.6h0M447.1 227.7h0M130.4 254.2h0M142.8 272.1h0M151.2 175.8h0M71.1 176.1h0M149.7 127.4h0M443.8 170.8h0M224.7 280.5h0M364.5 178.9h0M413.3 283.1h0M260.8 208.9h0M296.6 110.3h0M239.2 210.6h0M125.1 257.5h0M479.3 218.3h0M479.3 242.0h0M275.9 279.2h0M276.2 258.5h0M93.7 196.0h0M246.9 202.6h0M208.8 239.4h0M161.6 155.6h0M461.4 186.2h0M163.9 256.7h0M185.0 236.3h0M67.0 103.8h0M349.4 200.6h0M269.0 265.5h0M383.8 97.4h0" stroke="#d2e6fa" stroke-width="1.44" stroke-linecap="round" opacity="0.48" fill="none"/>
<path d="M391.1 126.8h0M400.4 14.0h0M193.3 120.3h0M91.3 114.6h0M420.1 19.2h0M139.9 95.5h0M351.5 3.9h0M292.6 24.6h0M449.5 69.9h0M46.3 51.6h0M44.9 118.2h0M463.2 93.7h0M41.1 122.4h0M165.9 84.9h0M404.2 72.9h0M95.3 32.1h0M388.6 16.1h0M219.5 121.6h0M235.1 19.9h0M350.2 45.6h0M416.7 47.7h0M435.4 107.7h0M125.0 71.4h0M252.6 16.0h0M475.3 44.6h0M331.8 7.9h0M493.5 127.9h0M366.3 17.0h0M356.2 61.2h0M265.8 28.5h0M112.4 110.3h0M328.2 97.5h0M392.6 52.4h0M302.3 39.5h0M352.4 56.2h0M414.0 38.1h0M222.0 10.7h0M58.6 28.0h0M48.0 55.4h0M221.0 115.1h0M60.3 128.5h0M85.3 108.3h0M210.8 32.1h0M331.3 46.4h0M47.7 17.0h0M363.9 93.9h0M513.9 33.0h0M406.9 44.7h0M286.0 36.3h0M236.4 119.3h0M160.1 55.4h0M473.3 59.0h0M427.8 69.7h0M206.8 94.0h0M351.4 49.7h0M516.0 12.0h0M445.3 94.1h0M378.6 61.8h0M397.2 5.7h0M359.7 113.0h0M234.7 96.6h0M371.8 65.5h0M407.4 63.2h0M97.4 68.2h0M399.2 21.4h0M260.2 108.9h0M46.3 112.6h0M207.5 47.4h0M373.3 74.8h0M177.3 20.3h0M240.7 116.1h0M514.5 93.7h0M372.0 89.7h0M476.0 21.0h0M109.1 110.1h0M49.4 68.2h0M232.2 119.8h0M338.1 29.4h0M70.8 61.7h0M303.2 61.0h0M317.2 8.1h0M211.5 108.3h0M177.8 24.6h0M125.2 122.5h0M454.6 52.9h0M197.2 48.0h0M460.9 118.6h0M494.3 111.8h0M364.3 15.3h0M489.4 21.8h0M392.6 46.6h0M57.5 85.9h0M161.6 115.9h0M126.2 87.1h0M248.2 6.2h0M174.4 40.4h0M409.6 100.7h0M486.2 21.6h0M140.8 48.7h0M192.8 26.9h0M399.0 0.7h0M296.2 17.4h0M189.5 38.1h0M260.6 122.5h0M391.2 56.1h0M512.1 33.1h0M129.8 83.0h0M407.3 94.5h0M281.9 94.3h0M198.7 123.8h0" stroke="#d2e6fa" stroke-width="0.80" stroke-linecap="round" opacity="0.20" fill="none"/>
</g>
<ellipse cx="285" cy="292" rx="210" ry="20" fill="url(#sgE)"/>
<rect x="0" y="274" width="517" height="16" fill="url(#sgG)" mask="url(#sgM)"/>
<rect x="0" y="288" width="517" height="2" fill="#d0f6fa" opacity=".9" mask="url(#sgM)"/></svg><!--/SLIDEBG-->
  <!-- left bar -->
  <div class="abs" style="left:0;top:0;width:42.5px;height:290px;background:#1b1b1c"></div>
  <svg class="abs" style="left:13px;top:11px" width="19" height="14" viewBox="0 0 19 14" fill="none" stroke="#bdbdbd" stroke-width=".85" stroke-linejoin="round" stroke-linecap="round">
    <path d="M3.8 1.9 C2.6 1.9 1.8 2.9 1.5 4.3 L.6 9.6 C.2 12 1.8 13.2 3.2 12.2 L5.4 9.9 H12.4 L14.6 12.2 C16 13.2 17.6 12 17.2 9.6 L16.3 4.3 C16 2.9 15.2 1.9 14 1.9 C12.8 1.9 12 2.5 11.2 3.3 H6.6 C5.8 2.5 5 1.9 3.8 1.9 Z"/>
    <path d="M4.9 5 L6.3 6.4 L4.9 7.8 L3.5 6.4 Z M12.6 5 L14 6.4 L12.6 7.8 L11.2 6.4 Z" stroke-width=".7" fill="#9a9a9a"/>
    <path d="M7.6 8.8 H10.2" stroke-width=".8"/>
  </svg>
  <div class="abs" style="left:21px;top:98px;width:1.4px;height:37px;background:linear-gradient(#1f7f5c,#2bb07c 50%,#1f7f5c)"></div>
  <div class="abs" style="left:21px;top:155px;width:1.4px;height:36.5px;background:linear-gradient(#1f7f5c,#2bb07c 50%,#1f7f5c)"></div>
  <div class="abs" id="t-2022" style="left:11.7px;top:142.6px;width:20px;text-align:center;font-size:4.6px;line-height:6px;color:#fff;font-weight:bold;font-family:'DejaVu Sans','Liberation Sans',sans-serif">2022</div>
  <svg class="abs" style="left:15px;top:271px" width="13" height="13" viewBox="0 0 13 13"><path d="M1.2 7 L3.9 2.3 H9.3 L12 7 L9.3 11.7 H3.9 Z" fill="#1de9b6" stroke="#1de9b6" stroke-width=".8" stroke-linejoin="round"/><path d="M5.2 7 L7.6 5.6 V8.4 Z" fill="#aef7e4"/></svg>
  <!-- title -->
  <div class="abs" id="t-h1a" style="left:84.3px;top:47.9px;font-family:'DejaVu Sans','Liberation Sans',sans-serif;font-weight:bold;font-size:24px;line-height:27px;color:#fff;letter-spacing:0;white-space:nowrap;transform:scaleX(1.045);transform-origin:0 0;-webkit-text-stroke:.35px #fff">VIDEO</div>
  <div class="abs" id="t-h1b" style="left:83.6px;top:73.6px;font-family:'DejaVu Sans','Liberation Sans',sans-serif;font-weight:bold;font-size:24px;line-height:27px;color:#fff;letter-spacing:0;white-space:nowrap;transform:scaleX(1.057);transform-origin:0 0;-webkit-text-stroke:.35px #fff">BACKGROUND</div>
  <svg class="abs" style="left:155px;top:54.5px" width="8" height="9" viewBox="0 0 8 9"><path d="M1.6 3.2 C1.2 2.4 2.2 1.8 2.8 2.4 L3 1.6 C3.2 .9 4.1 .9 4.3 1.6 C4.6 1 5.5 1.1 5.6 1.9 C6 1.5 6.8 1.8 6.8 2.6 V5.4 C6.8 7.4 5.6 8.4 4.2 8.4 C2.8 8.4 2 7.4 1.4 5.8 L.9 4.6 C.7 3.8 1.4 3.4 1.8 3.9 Z" fill="#dcdcdc" stroke="#3a3a3a" stroke-width=".6"/></svg>
  <!-- film icon -->
  <svg class="abs" style="left:87px;top:111px" width="32" height="23" viewBox="0 0 32 23" fill="none" stroke="#1eeac0" stroke-width="1.9">
    <rect x="1.5" y="1.5" width="29" height="19.8"/>
    <path d="M8 1.5 V21.3 M24 1.5 V21.3 M1.5 8.1 H8 M1.5 14.7 H8 M24 8.1 H30.5 M24 14.7 H30.5"/>
    <path d="M13.6 7.6 L18.6 11.4 L13.6 15.2 Z" stroke="#fff" stroke-width="1.3" stroke-linejoin="round"/>
  </svg>
  <!-- subtitle -->
  <div class="abs" id="t-sub" style="left:86.5px;top:146.8px;font-weight:bold;font-size:9px;line-height:11px;color:#fff;white-space:nowrap;letter-spacing:-.22px">Your Subtitle</div>
  <div class="abs" id="t-para" style="left:86.6px;top:166.1px;width:130px;font-size:7.1px;line-height:9.52px;color:#eef2f7;white-space:nowrap;letter-spacing:0;transform:scaleX(.875);transform-origin:0 0">People remember 55% more<br>information when they see it in a visual<br>rather than hearing it. Turning dense<br>data or complex information into easily<br>digestible infographics helps make a<br>lasting impression.</div>
  <div class="abs" style="left:85.7px;top:230.5px;width:51px;height:14.8px;border:1px solid rgba(255,255,255,.45)"></div>
  <div class="abs" id="t-learn" style="left:85.7px;top:235.2px;width:51px;text-align:center;font-size:5.2px;line-height:6px;font-weight:bold;color:#fff;white-space:nowrap;letter-spacing:.1px">LEARN MORE</div>
  <!-- avatar -->
  <!--AVATAR--><svg class="abs" style="left:289px;top:100px;overflow:visible" width="152" height="150" viewBox="0 0 483 476.7"><defs><clipPath id="avc"><circle cx="239.0" cy="238.0" r="230.7"/></clipPath></defs><circle cx="239.0" cy="238.0" r="230.7" fill="#d6dfe9"/><g clip-path="url(#avc)"><path d="M205 75 C210 55 228 38 252 35 C276 33 296 48 300 88 Q322.2 92.6 334.0 112.0 Q354.3 124.7 360.0 148.0 Q370.0 170.6 362.0 194.0 Q381.0 212.0 384.0 238.0 Q391.0 263.7 380.0 288.0 Q397.6 314.3 398.0 346.0 Q410.0 382.3 404.0 420.0 L28 420 Q18.0 378.2 26.0 336.0 Q27.6 306.8 46.0 284.0 Q47.8 258.3 66.0 240.0 Q80.2 220.4 104.0 216.0 Q107.3 193.3 126.0 180.0 Q127.7 153.4 146.0 134.0 Q151.9 111.5 172.0 100.0 Q183.1 80.3 205.0 75.0 Z" fill="#5b2d1c"/><path d="M100 335 C120 320 150 305 186 286 L186 340 L120 365 Z" fill="#46210f" opacity=".8"/><path d="M304 286 C330 300 345 318 352 340 L304 345 Z" fill="#46210f" opacity=".7"/><path d="M184 250 L304 250 L304 335 L184 335 Z" fill="#f3c096"/><path d="M186 150 C176 170 166 195 160 218 C160 240 168 258 182 272 C200 292 228 306 250 309 C272 306 298 290 314 272 C330 256 342 238 342 216 C340 190 338 170 334 152 C326 126 300 108 290 108 C278 108 268 114 264 120 C258 112 248 108 238 110 C214 112 194 128 186 150 Z" fill="#f9d0aa"/><path d="M264 172 C266 190 262 208 258 224 C262 228 268 228 272 225" fill="none" stroke="#eeb088" stroke-width="2.2" stroke-linecap="round" opacity=".7"/><circle cx="200" cy="212" r="22" fill="#f5a76c"/><circle cx="297" cy="212" r="22" fill="#f5a76c"/><path d="M187 163 C198 150 218 146 236 157 C222 154 204 155 187 163 Z" fill="#4a2212" stroke="#4a2212" stroke-width="5" stroke-linejoin="round"/><path d="M268 157 C286 146 306 150 318 163 C302 155 284 154 268 157 Z" fill="#4a2212" stroke="#4a2212" stroke-width="5" stroke-linejoin="round"/><path d="M197 180 C204 170 220 170 227 180 C220 187 204 187 197 180 Z" fill="#fff"/><circle cx="212" cy="179" r="6.6" fill="#9a381c"/><path d="M196 180 C204 169 220 169 228 180" fill="none" stroke="#3a1a0e" stroke-width="2.6" stroke-linecap="round"/><path d="M276 180 C283 170 299 170 306 180 C299 187 283 187 276 180 Z" fill="#fff"/><circle cx="291" cy="179" r="6.6" fill="#9a381c"/><path d="M275 180 C283 169 299 169 307 180" fill="none" stroke="#3a1a0e" stroke-width="2.6" stroke-linecap="round"/><path d="M228 250 C236 246 244 248 248 250 C252 248 260 246 268 250 C260 260 236 260 228 250 Z" fill="#e88a84"/><circle cx="165" cy="230" r="7" fill="#fdfdfd"/><circle cx="330" cy="235" r="7" fill="#fdfdfd"/><path d="M184 322 C205 314 228 311 246 311 C266 311 288 315 304 322 L306 333 C330 340 372 348 404 358 C420 364 432 376 440 392 L440 480 L20 480 L40 396 C52 380 72 372 96 364 C130 352 160 344 184 333 Z" fill="#f36b3d"/><path d="M184 333 C215 343 275 343 306 333" fill="none" stroke="#e55d31" stroke-width="1.6" opacity=".7"/></g></svg><!--/AVATAR-->
  <!-- menu -->
  <div class="abs" style="left:473.6px;top:0;width:41.8px;height:109px;background:#1b1b1c"></div>
  <div class="abs" style="left:489.6px;top:7.9px;width:11px;height:1.6px;background:#2c8c68"></div>
  <div class="abs" style="left:489.6px;top:10.1px;width:11px;height:1.6px;background:#2c8c68"></div>
  <div class="abs" style="left:489.6px;top:12.3px;width:11px;height:1.6px;background:#2c8c68"></div>
  <div class="abs" style="left:489.6px;top:14.5px;width:6px;height:1.6px;background:#2c8c68"></div>
  <div class="mn" style="top:28.6px;font-weight:bold;color:#fff;font-size:4.7px">START</div>
  <div class="mn" style="top:39.9px">SINGLE PHOTO</div>
  <div class="mn" style="top:51.5px">PHOTO GRID</div>
  <div class="mn" style="top:63.1px">VIDEO BG</div>
  <div class="mn" style="top:74.9px">CHARTS</div>
  <div class="mn" style="top:86.3px">MOCKUPS</div>
  <div class="mn" style="top:97.5px">CONTACT US</div>
</div>

<!-- TOP BAR -->
<div id="topbar">
  <!-- hamburger -->
  <div class="abs" style="left:7px;top:7px;width:13px;height:2px;background:#fff;border-radius:1px"></div>
  <div class="abs" style="left:7px;top:11px;width:13px;height:2px;background:#fff;border-radius:1px"></div>
  <div class="abs" style="left:7px;top:15px;width:13px;height:2px;background:#fff;border-radius:1px"></div>
  <!-- logo -->
  <svg class="abs" style="left:36px;top:3px" width="20" height="16" viewBox="36 3 20 16">
    <path d="M37.8 10.2 C39.2 7.4 41.4 5.6 43.8 5.2 L46.4 10.3 C43.4 10.5 41.2 11.8 39.6 13.8 C38.6 12.8 38 11.6 37.8 10.2 Z" fill="#29a8e0"/>
    <path d="M44 5.2 L50.6 4.7 L49.2 10.5 L46.5 10.6 Z" fill="#f2d21b"/>
    <path d="M50 7.3 L54.4 8.3 L51.2 10.9 L49.2 10.6 Z" fill="#3fb574"/>
    <path d="M51.4 11 L54.6 10.5 L53.6 12.3 L51.6 12.7 Z" fill="#e04a3f"/>
    <circle cx="46.8" cy="14.3" r="2.1" fill="#fff"/>
    <circle cx="47.7" cy="13.3" r=".75" fill="#242a37"/>
  </svg>
  <div class="t" id="t-visme" style="left:56.8px;top:2.4px;font-size:15.4px;color:#fff;letter-spacing:0">visme</div>
  <!-- undo -->
  <svg class="abs" style="left:103px;top:6px" width="12" height="12" viewBox="0 0 12 12" fill="none" stroke="#fff" stroke-width="1.3" stroke-linecap="round" stroke-linejoin="round">
    <path d="M1.6 3.6 H7 A3.4 3.4 0 0 1 7 10.4 H4.4"/>
    <path d="M3.6 1.4 L1.4 3.6 L3.6 5.8" fill="#fff" stroke-width=".8"/>
  </svg>
  <div class="t" id="t-saved" style="left:121.2px;top:8.1px;font-size:7.7px;color:#8b94a5;letter-spacing:-.31px">All changes saved</div>
  <!-- title -->
  <div class="t" id="t-title" style="left:378.5px;top:3.6px;font-size:9.2px;color:#dfe3ea;letter-spacing:-.19px">One Skill - Dark Theme</div>
  <div class="t" id="t-by" style="left:447.6px;top:14px;font-size:7px;color:#8b94a5;font-style:italic;letter-spacing:-.2px">By One</div>
  <svg class="abs" style="left:473px;top:9px" width="7" height="5" viewBox="0 0 7 5" fill="none" stroke="#dfe3ea" stroke-width="1.1" stroke-linecap="round" stroke-linejoin="round"><path d="M1 1.2 L3.5 3.7 L6 1.2"/></svg>
  <!-- comment icon -->
  <svg class="abs" style="left:645px;top:7px" width="11" height="11" viewBox="0 0 11 11">
    <path d="M1.6 .6 H9 Q9.8 .6 9.8 1.4 V9.9 L7.6 7.8 H1.6 Q.8 7.8 .8 7 V1.4 Q.8 .6 1.6 .6 Z" fill="#fff"/>
    <rect x="2.6" y="2.6" width="5.2" height=".9" fill="#242a37"/><rect x="2.6" y="4.4" width="3.6" height=".9" fill="#242a37"/>
  </svg>
  <!-- avatar -->
  <div class="abs" style="left:663.7px;top:3.2px;width:17px;height:17px;border-radius:50%;background:#4dbf6b"></div>
  <div class="t" style="left:663.7px;top:7.4px;width:17px;text-align:center;font-size:8.6px;color:#fff">O</div>
  <svg class="abs" style="left:682.5px;top:4.5px" width="15" height="15" viewBox="0 0 15 15" fill="none" stroke="#cfd5de">
    <circle cx="7.4" cy="7.3" r="6.4" stroke-width=".7" stroke-dasharray="1 1"/>
    <path d="M4.6 7.3 H10.2 M7.4 4.5 V10.1" stroke-width=".9"/>
  </svg>
  <!-- present -->
  <div class="abs" style="left:708px;top:2.6px;width:73.5px;height:19px;border-radius:9.5px;background:#35445a"></div>
  <div class="abs" style="left:761.5px;top:2.6px;width:1px;height:19px;background:#263141"></div>
  <svg class="abs" style="left:715.5px;top:8.8px" width="7" height="6" viewBox="0 0 7 6"><path d="M.3 .2 L6.3 3 L.3 5.8 Z" fill="#fff"/></svg>
  <div class="t" id="t-present" style="left:726.9px;top:7.5px;font-size:8.2px;color:#f2f4f7;letter-spacing:-.27px">Present</div>
  <svg class="abs" style="left:766.8px;top:9.2px" width="10" height="6" viewBox="0 0 10 6" fill="none" stroke="#fff" stroke-width="1.3" stroke-linecap="round" stroke-linejoin="round"><path d="M1 1 L4.9 4.6 L8.8 1"/></svg>
  <div class="abs" style="left:796.5px;top:2.6px;width:4px;height:19px;border-radius:3px 0 0 3px;background:#394659"></div>
  <div class="abs" style="left:0;top:24px;width:800px;height:1px;background:rgba(36,42,55,.55)"></div>
</div>

<!-- SIDEBAR -->
<div id="sidebar">
  <div class="abs" style="left:0;top:75.5px;width:30px;height:35.5px;background:#2d3a4d"></div>
  <!-- Basics -->
  <svg class="abs" style="left:6px;top:4.5px" width="16" height="16" viewBox="0 0 16 16">
    <g transform="rotate(-18 4.5 4)"><rect x="1.6" y="1" width="5.6" height="5.6" rx=".8" fill="#aeb8c6"/><text x="4.4" y="5.4" font-size="4.4" font-weight="bold" text-anchor="middle" fill="#272d3b" font-family="Liberation Sans, sans-serif">A</text></g>
    <rect x="1.2" y="8.4" width="5.8" height="6.2" rx=".8" fill="#aeb8c6"/><text x="4.1" y="13.2" font-size="4.6" font-weight="bold" text-anchor="middle" fill="#272d3b" font-family="Liberation Sans, sans-serif">B</text>
    <g transform="rotate(-14 11 10)"><rect x="7.6" y="6.6" width="6.6" height="6.6" rx=".8" fill="#fff"/><text x="10.9" y="11.7" font-size="5" font-weight="bold" text-anchor="middle" fill="#272d3b" font-family="Liberation Sans, sans-serif">C</text></g>
  </svg>
  <div class="sb" style="top:23.9px"><span>Basics</span></div>
  <!-- Graphics -->
  <svg class="abs" style="left:7px;top:46.5px" width="13" height="11" viewBox="0 0 13 11">
    <rect x=".9" y="1.6" width="5.6" height="5" fill="none" stroke="#c9d0da" stroke-width=".9"/>
    <circle cx="8" cy="3.2" r="2.7" fill="#fff"/>
    <circle cx="8.4" cy="2.6" r="1" fill="#272d3b"/>
    <path d="M4.6 10 L8 4.4 L11.6 10 Z" fill="#fff"/>
    <path d="M6.6 8 L8 5.6 L9.4 8 Z" fill="#272d3b" opacity=".55"/>
  </svg>
  <div class="sb" style="top:60px"><span>Graphics</span></div>
  <!-- Photos -->
  <svg class="abs" style="left:8.5px;top:83.5px" width="11" height="11" viewBox="0 0 11 11">
    <rect x=".4" y=".4" width="10.2" height="10.2" rx="2" fill="#fff"/>
    <rect x="1.6" y="1.6" width="7.8" height="5.6" rx=".6" fill="#2d3a4d"/>
    <circle cx="3.6" cy="3.6" r="1" fill="#fff"/>
    <path d="M1.6 7.4 L4.2 5.2 L5.8 6.6 L7.6 4.4 L9.4 6.6 V9 H1.6 Z" fill="#fff"/>
  </svg>
  <div class="sb" style="top:97.8px;color:#fff"><span>Photos</span></div>
  <!-- Data -->
  <svg class="abs" style="left:7px;top:118.5px" width="13" height="14" viewBox="0 0 13 14">
    <path d="M6 2.6 A5.4 5.4 0 1 0 11.4 8 H6 Z" fill="#e4e9ef"/>
    <path d="M7.4 .8 A5.2 5.2 0 0 1 12.4 6.4 H7.4 Z" fill="none" stroke="#e4e9ef" stroke-width=".9"/>
  </svg>
  <div class="sb" style="top:134.8px"><span>Data</span></div>
  <!-- Media -->
  <svg class="abs" style="left:6px;top:157.5px" width="15" height="13" viewBox="0 0 15 13">
    <rect x=".5" y=".6" width="13.6" height="8.4" rx=".8" fill="#eef1f5"/>
    <path d="M6 2.6 L9.6 4.8 L6 7 Z" fill="#272d3b"/>
    <rect x="2" y="2.6" width="1" height="4.4" fill="#272d3b"/><rect x="3.8" y="2.6" width="1" height="4.4" fill="#272d3b"/>
    <path d="M11.2 5.4 V10.2 A1.3 1.3 0 1 1 10.2 9 V5.4 Z" fill="#eef1f5" stroke="#272d3b" stroke-width=".5"/>
  </svg>
  <div class="sb" style="top:172.2px"><span>Media</span></div>
  <!-- Theme Colors -->
  <svg class="abs" style="left:7px;top:192.5px" width="12" height="12" viewBox="0 0 12 12">
    <path d="M6 .6 C2.8 .6 .6 3 .6 5.8 C.6 8.8 2.8 11.2 5.4 11.2 C6.6 11.2 6.8 10.4 6.4 9.6 C5.9 8.6 6.6 7.8 7.6 7.8 H9 C10.4 7.8 11.4 6.8 11.4 5.4 C11.4 2.6 9 .6 6 .6 Z" fill="#f1f3f6"/>
    <circle cx="3" cy="5" r=".95" fill="#272d3b"/><circle cx="4.8" cy="2.8" r=".95" fill="#272d3b"/><circle cx="7.6" cy="2.8" r=".95" fill="#272d3b"/><circle cx="9.4" cy="5" r=".95" fill="#272d3b"/>
  </svg>
  <div class="sb" style="top:207px"><span>Theme</span></div>
  <div class="sb" style="top:215.5px"><span>Colors</span></div>
  <!-- My Files -->
  <svg class="abs" style="left:6.5px;top:238.5px" width="14" height="13" viewBox="0 0 14 13">
    <path d="M3.4 1.2 L10.6 .5 V2.4 H3.4 Z" fill="#8e99a9"/>
    <path d="M.6 2 H5.2 L6.4 3.2 H13.2 V12.2 H.6 Z" fill="#f1f3f6"/>
    <rect x="3.2" y="5.6" width="3" height="4" fill="none" stroke="#272d3b" stroke-width=".7"/>
    <path d="M7.6 7.6 H10.6 M9.1 6.1 V9.1" stroke="#272d3b" stroke-width=".7"/>
  </svg>
  <div class="sb" style="top:255px"><span>My Files</span></div>
  <!-- Apps -->
  <svg class="abs" style="left:7.5px;top:279.6px" width="12" height="12" viewBox="0 0 12 12">
    <rect x=".2" y=".2" width="4.7" height="4.7" fill="#f1f3f6"/><rect x="6.3" y=".2" width="4.7" height="4.7" fill="#4b5b72"/>
    <rect x=".2" y="6.3" width="4.7" height="4.7" fill="#f1f3f6"/><rect x="6.3" y="6.3" width="4.7" height="4.7" fill="#f1f3f6"/>
  </svg>
  <div class="sb" style="top:292.8px"><span>Apps</span></div>
</div>

<!-- PANEL -->
<div id="panel">
  <!-- search -->
  <div class="abs" style="left:6.6px;top:9.6px;width:130.4px;height:22.2px;border-radius:4px;background:#384759"></div>
  <svg class="abs" style="left:13.5px;top:15.5px" width="11" height="11" viewBox="0 0 11 11" fill="none" stroke="#9ba8b9" stroke-width=".9" stroke-linecap="round"><circle cx="4.6" cy="4.6" r="3.2"/><path d="M7 7.2 L9.4 9.8"/></svg>
  <div class="t" id="t-search" style="position:absolute;left:26.7px;top:16.6px;font-size:8.2px;line-height:10px;color:#fff;font-weight:bold;white-space:nowrap;letter-spacing:-.68px">mountains at night</div>
  <svg class="abs" style="left:124px;top:17.8px" width="8" height="8" viewBox="0 0 8 8" fill="none" stroke="#fff" stroke-width="1.3" stroke-linecap="round"><path d="M1 1 L6.6 6.6 M6.6 1 L1 6.6"/></svg>
  <!-- buttons -->
  <div class="abs" style="left:7.9px;top:42.7px;width:63px;height:19.4px;border-radius:2.5px;background:#e8eef3"></div>
  <div class="abs" style="left:74.9px;top:42.7px;width:62.3px;height:19.4px;border-radius:2.5px;background:#e8eef3"></div>
  <svg class="abs" style="left:18.5px;top:46.5px" width="12" height="11" viewBox="0 0 12 11" fill="none" stroke="#4a586b" stroke-width=".9" stroke-linecap="round" stroke-linejoin="round"><path d="M1 5.6 V9.6 Q1 10.2 1.6 10.2 H10.4 Q11 10.2 11 9.6 V5.6"/><path d="M6 7.4 V1 M3.6 3.2 L6 .8 L8.4 3.2"/></svg>
  <div class="t" id="t-upload" style="position:absolute;left:34px;top:47.3px;font-size:8.8px;line-height:10px;color:#2d3a4d;white-space:nowrap;letter-spacing:-.4px">Upload</div>
  <svg class="abs" style="left:79.2px;top:46.5px" width="12" height="11" viewBox="0 0 12 11" fill="none" stroke="#4a586b" stroke-width=".9" stroke-linejoin="round"><rect x="1.8" y="2.6" width="9.4" height="7.6" rx="1"/><path d="M.8 7 V2 Q.8 1 1.8 1 H8.6"/><circle cx="5" cy="5" r="1" /><path d="M2.4 9.4 L5.4 7 L7 8.2 L9 6.2 L11 8"/></svg>
  <div class="t" id="t-myimg" style="position:absolute;left:93.8px;top:47.3px;font-size:8.6px;line-height:10px;color:#2d3a4d;white-space:nowrap;letter-spacing:-.5px">My Images</div>
  <!-- tabs -->
  <div class="abs" style="left:8.4px;top:71.4px;width:128.8px;height:19.2px;border-radius:2.5px;background:#273340"></div>
  <div class="abs" style="left:8.4px;top:71.4px;width:43px;height:19.2px;border-radius:2.5px 0 0 2.5px;background:#2f3f51"></div>
  <div class="abs" style="left:93.7px;top:75px;width:1px;height:12px;background:#33414f"></div>
  <div class="t" id="t-all" style="position:absolute;left:24.8px;top:76px;font-size:8.6px;line-height:10px;color:#fff;font-weight:bold;white-space:nowrap;letter-spacing:-.2px">All</div>
  <div class="t" id="t-mock" style="position:absolute;left:56.6px;top:76px;font-size:8.6px;line-height:10px;color:#8e9eb2;white-space:nowrap;letter-spacing:-.35px">Mockups</div>
  <div class="t" id="t-cut" style="position:absolute;left:101px;top:76px;font-size:8.6px;line-height:10px;color:#8e9eb2;white-space:nowrap;letter-spacing:-.3px">Cutouts</div>
  <!-- free photos -->
  <div class="abs" style="left:4.7px;top:105.7px;width:44.7px;height:1px;background:#4b5a6d"></div>
  <div class="abs" style="left:95.3px;top:105.7px;width:44.3px;height:1px;background:#4b5a6d"></div>
  <div class="t" id="t-free" style="position:absolute;left:52.8px;top:101.2px;font-size:8px;line-height:10px;color:#8f9cb0;white-space:nowrap;letter-spacing:-.42px">Free Photos</div>
</div>

<!--PHOTOS--><svg class="abs" style="left:30px;top:140px" width="145" height="337" viewBox="30 140 145 337"><defs><clipPath id="ca1"><rect x="32.2" y="144.6" width="68.4" height="102.2"/></clipPath><clipPath id="ca2"><rect x="32.2" y="249.0" width="68.4" height="85.5"/></clipPath><clipPath id="ca3"><rect x="32.2" y="337.0" width="68.4" height="44.4"/></clipPath><clipPath id="ca4"><rect x="32.2" y="383.6" width="68.4" height="94.4"/></clipPath><clipPath id="cb1"><rect x="105.3" y="144.6" width="68.3" height="102.2"/></clipPath><clipPath id="cb2"><rect x="105.3" y="249.0" width="68.3" height="44.9"/></clipPath><clipPath id="cb3"><rect x="105.3" y="296.3" width="68.3" height="45.1"/></clipPath><clipPath id="cb4"><rect x="105.3" y="343.4" width="68.3" height="121.3"/></clipPath><clipPath id="cb5"><rect x="105.3" y="467.0" width="68.3" height="11.0"/></clipPath><filter id="bl1" x="-50%" y="-50%" width="200%" height="200%"><feGaussianBlur stdDeviation="1"/></filter><filter id="bl2" x="-50%" y="-50%" width="200%" height="200%"><feGaussianBlur stdDeviation="2.2"/></filter><filter id="bl4" x="-50%" y="-50%" width="200%" height="200%"><feGaussianBlur stdDeviation="4"/></filter><filter id="bl6" x="-80%" y="-80%" width="260%" height="260%"><feGaussianBlur stdDeviation="7"/></filter><filter id="bl05" x="-50%" y="-50%" width="200%" height="200%"><feGaussianBlur stdDeviation=".5"/></filter><linearGradient id="ga1" x1="0" y1="0" x2="0" y2="1"><stop offset="0" stop-color="#161632"/><stop offset=".25" stop-color="#1b1b46"/><stop offset=".5" stop-color="#232462"/><stop offset=".65" stop-color="#2c2f80"/><stop offset=".76" stop-color="#373d9a"/><stop offset=".82" stop-color="#3a42a0"/><stop offset=".9" stop-color="#20264e"/><stop offset="1" stop-color="#0b0c15"/></linearGradient><radialGradient id="rda1" cx=".5" cy=".5" r=".5"><stop offset="0" stop-color="#101130" stop-opacity=".75"/><stop offset="1" stop-color="#101130" stop-opacity="0"/></radialGradient><linearGradient id="gb1" x1="0" y1="0" x2="0" y2="1"><stop offset="0" stop-color="#17181b"/><stop offset=".3" stop-color="#202124"/><stop offset=".5" stop-color="#303336"/><stop offset=".58" stop-color="#3c4041"/><stop offset=".66" stop-color="#1a1612"/><stop offset="1" stop-color="#0b0a09"/></linearGradient><linearGradient id="ga2" x1="0" y1="0" x2="0" y2="1"><stop offset="0" stop-color="#0a4656"/><stop offset=".3" stop-color="#0c5a64"/><stop offset=".52" stop-color="#0e6a6e"/><stop offset=".72" stop-color="#0f8088"/><stop offset=".86" stop-color="#0c7682"/><stop offset="1" stop-color="#09586a"/></linearGradient><radialGradient id="rda2" cx=".5" cy=".5" r=".5"><stop offset="0" stop-color="#073646" stop-opacity=".85"/><stop offset="1" stop-color="#073646" stop-opacity="0"/></radialGradient><linearGradient id="gb2" x1="0" y1="0" x2="0" y2="1"><stop offset="0" stop-color="#12161c"/><stop offset=".55" stop-color="#1a2029"/><stop offset="1" stop-color="#1d242e"/></linearGradient><linearGradient id="gb3" x1="0" y1="0" x2="0" y2="1"><stop offset="0" stop-color="#15181f"/><stop offset=".5" stop-color="#1e2026"/><stop offset="1" stop-color="#0c0e13"/></linearGradient><linearGradient id="ga3" x1="0" y1="0" x2="0" y2="1"><stop offset="0" stop-color="#0b1734"/><stop offset=".6" stop-color="#0f1a3a"/><stop offset="1" stop-color="#1a1c2c"/></linearGradient><linearGradient id="ga4" x1="0" y1="0" x2="0" y2="1"><stop offset="0" stop-color="#0d3f5c"/><stop offset=".28" stop-color="#0d5674"/><stop offset=".48" stop-color="#107f9e"/><stop offset=".6" stop-color="#1798b4"/><stop offset=".67" stop-color="#2a9cb4"/><stop offset=".73" stop-color="#2e7890"/><stop offset=".8" stop-color="#27546c"/><stop offset="1" stop-color="#142434"/></linearGradient><linearGradient id="gb4" x1="0" y1="0" x2="0" y2="1"><stop offset="0" stop-color="#2e3034"/><stop offset=".3" stop-color="#333437"/><stop offset=".55" stop-color="#393433"/><stop offset=".68" stop-color="#433533"/><stop offset=".8" stop-color="#2a2223"/><stop offset="1" stop-color="#1b191b"/></linearGradient><linearGradient id="gb5" x1="0" y1="0" x2="1" y2="0"><stop offset="0" stop-color="#0a1d4a"/><stop offset=".5" stop-color="#0c2c6a"/><stop offset="1" stop-color="#0d3274"/></linearGradient></defs><g clip-path="url(#ca1)"><rect x="32.2" y="144.6" width="68.4" height="102.2" fill="url(#ga1)" /><path d="M32 144 L52 144 L60 176 L68 216 L48 216 L40 180 Z" fill="#625a8c" opacity=".5" filter="url(#bl4)"/><path d="M38 144 L46 144 L54 178 L60 206 L53 206 L45 176 Z" fill="#8f86b4" opacity=".3" filter="url(#bl2)"/><ellipse cx="98" cy="160" rx="30" ry="50" fill="url(#rda1)"/><circle cx="54.4" cy="154.2" r="0.25" fill="#fff" opacity="0.15"/><circle cx="68.9" cy="167.8" r="0.13" fill="#fff" opacity="0.31"/><circle cx="34.8" cy="172.1" r="0.13" fill="#fff" opacity="0.15"/><circle cx="61.2" cy="197.0" r="0.14" fill="#fff" opacity="0.20"/><circle cx="75.1" cy="204.7" r="0.24" fill="#fff" opacity="0.27"/><circle cx="99.0" cy="147.6" r="0.29" fill="#fff" opacity="0.23"/><circle cx="42.1" cy="152.1" r="0.18" fill="#fff" opacity="0.43"/><circle cx="44.6" cy="181.5" r="0.25" fill="#fff" opacity="0.26"/><circle cx="69.7" cy="148.6" r="0.13" fill="#fff" opacity="0.20"/><circle cx="78.7" cy="171.7" r="0.18" fill="#fff" opacity="0.34"/><circle cx="63.2" cy="163.6" r="0.28" fill="#fff" opacity="0.39"/><circle cx="48.9" cy="181.0" r="0.23" fill="#fff" opacity="0.45"/><circle cx="82.1" cy="162.8" r="0.32" fill="#fff" opacity="0.16"/><circle cx="60.8" cy="192.6" r="0.15" fill="#fff" opacity="0.31"/><circle cx="34.9" cy="186.9" r="0.27" fill="#fff" opacity="0.34"/><circle cx="92.1" cy="164.5" r="0.26" fill="#fff" opacity="0.35"/><circle cx="71.9" cy="173.5" r="0.29" fill="#fff" opacity="0.48"/><circle cx="64.6" cy="186.7" r="0.13" fill="#fff" opacity="0.39"/><circle cx="76.5" cy="207.5" r="0.28" fill="#fff" opacity="0.23"/><circle cx="58.6" cy="187.0" r="0.12" fill="#fff" opacity="0.30"/><circle cx="43.7" cy="152.0" r="0.13" fill="#fff" opacity="0.41"/><circle cx="41.0" cy="160.3" r="0.20" fill="#fff" opacity="0.45"/><circle cx="37.7" cy="173.1" r="0.23" fill="#fff" opacity="0.46"/><circle cx="88.2" cy="199.3" r="0.18" fill="#fff" opacity="0.28"/><circle cx="56.7" cy="200.6" r="0.31" fill="#fff" opacity="0.18"/><circle cx="44.3" cy="159.3" r="0.17" fill="#fff" opacity="0.30"/><circle cx="72.5" cy="161.2" r="0.12" fill="#fff" opacity="0.28"/><circle cx="57.5" cy="180.5" r="0.31" fill="#fff" opacity="0.38"/><circle cx="67.5" cy="183.7" r="0.26" fill="#fff" opacity="0.14"/><circle cx="93.7" cy="194.0" r="0.29" fill="#fff" opacity="0.42"/><circle cx="59.0" cy="169.9" r="0.14" fill="#fff" opacity="0.36"/><circle cx="36.5" cy="148.9" r="0.16" fill="#fff" opacity="0.18"/><circle cx="55.5" cy="147.9" r="0.12" fill="#fff" opacity="0.18"/><circle cx="39.1" cy="167.6" r="0.13" fill="#fff" opacity="0.45"/><circle cx="74.2" cy="154.0" r="0.17" fill="#fff" opacity="0.25"/><circle cx="57.1" cy="152.4" r="0.29" fill="#fff" opacity="0.50"/><circle cx="64.1" cy="175.3" r="0.14" fill="#fff" opacity="0.16"/><circle cx="55.6" cy="161.4" r="0.29" fill="#fff" opacity="0.18"/><circle cx="33.8" cy="204.9" r="0.23" fill="#fff" opacity="0.18"/><circle cx="69.4" cy="146.3" r="0.23" fill="#fff" opacity="0.49"/><circle cx="91.3" cy="188.7" r="0.17" fill="#fff" opacity="0.26"/><circle cx="43.6" cy="193.5" r="0.23" fill="#fff" opacity="0.42"/><circle cx="54.7" cy="158.7" r="0.28" fill="#fff" opacity="0.49"/><circle cx="90.5" cy="195.7" r="0.28" fill="#fff" opacity="0.40"/><circle cx="47.7" cy="177.4" r="0.19" fill="#fff" opacity="0.13"/><circle cx="34.1" cy="162.3" r="0.17" fill="#fff" opacity="0.38"/><circle cx="97.6" cy="172.9" r="0.31" fill="#fff" opacity="0.50"/><circle cx="97.5" cy="167.7" r="0.16" fill="#fff" opacity="0.21"/><circle cx="45.7" cy="157.5" r="0.24" fill="#fff" opacity="0.46"/><circle cx="89.7" cy="175.0" r="0.25" fill="#fff" opacity="0.42"/><circle cx="38.0" cy="186.5" r="0.30" fill="#fff" opacity="0.42"/><circle cx="83.5" cy="174.9" r="0.16" fill="#fff" opacity="0.42"/><circle cx="54.9" cy="195.3" r="0.31" fill="#fff" opacity="0.27"/><circle cx="59.7" cy="204.6" r="0.26" fill="#fff" opacity="0.18"/><circle cx="40.9" cy="154.2" r="0.30" fill="#fff" opacity="0.43"/><circle cx="42.2" cy="197.0" r="0.32" fill="#fff" opacity="0.37"/><circle cx="56.2" cy="179.4" r="0.15" fill="#fff" opacity="0.13"/><circle cx="98.6" cy="185.8" r="0.23" fill="#fff" opacity="0.47"/><circle cx="61.9" cy="199.8" r="0.29" fill="#fff" opacity="0.20"/><circle cx="49.4" cy="163.2" r="0.17" fill="#fff" opacity="0.34"/><circle cx="49.9" cy="171.2" r="0.15" fill="#fff" opacity="0.47"/><circle cx="56.4" cy="173.6" r="0.24" fill="#fff" opacity="0.46"/><circle cx="61.0" cy="202.8" r="0.22" fill="#fff" opacity="0.32"/><circle cx="68.0" cy="145.8" r="0.21" fill="#fff" opacity="0.19"/><circle cx="32.5" cy="195.2" r="0.15" fill="#fff" opacity="0.30"/><circle cx="81.8" cy="179.9" r="0.19" fill="#fff" opacity="0.32"/><circle cx="70.2" cy="194.3" r="0.14" fill="#fff" opacity="0.33"/><circle cx="49.2" cy="162.1" r="0.27" fill="#fff" opacity="0.31"/><circle cx="70.6" cy="192.8" r="0.30" fill="#fff" opacity="0.29"/><circle cx="74.1" cy="176.6" r="0.22" fill="#fff" opacity="0.38"/><circle cx="63.1" cy="178.4" r="0.22" fill="#fff" opacity="0.48"/><circle cx="80.0" cy="200.1" r="0.31" fill="#fff" opacity="0.22"/><circle cx="70.5" cy="204.4" r="0.29" fill="#fff" opacity="0.17"/><circle cx="40.5" cy="172.6" r="0.13" fill="#fff" opacity="0.21"/><circle cx="37.2" cy="187.0" r="0.28" fill="#fff" opacity="0.46"/><circle cx="42.8" cy="190.0" r="0.25" fill="#fff" opacity="0.17"/><circle cx="92.6" cy="205.9" r="0.16" fill="#fff" opacity="0.48"/><circle cx="59.4" cy="175.5" r="0.32" fill="#fff" opacity="0.44"/><circle cx="43.2" cy="171.9" r="0.22" fill="#fff" opacity="0.25"/><circle cx="45.6" cy="164.8" r="0.26" fill="#fff" opacity="0.13"/><circle cx="70.1" cy="172.5" r="0.12" fill="#fff" opacity="0.25"/><circle cx="74.9" cy="177.1" r="0.13" fill="#fff" opacity="0.49"/><circle cx="86.1" cy="206.2" r="0.14" fill="#fff" opacity="0.22"/><circle cx="34.9" cy="194.0" r="0.17" fill="#fff" opacity="0.17"/><circle cx="61.1" cy="202.4" r="0.28" fill="#fff" opacity="0.22"/><circle cx="42.4" cy="202.8" r="0.23" fill="#fff" opacity="0.39"/><circle cx="38.3" cy="148.2" r="0.26" fill="#fff" opacity="0.28"/><circle cx="37.2" cy="204.1" r="0.25" fill="#fff" opacity="0.42"/><circle cx="37.9" cy="198.9" r="0.13" fill="#fff" opacity="0.45"/><circle cx="63.2" cy="166.1" r="0.23" fill="#fff" opacity="0.47"/><path d="M32 209.6 L35 211 L38 212.4 L42 215 L46 216.6 L50 217 L54 216.8 L57 218 L59 222 L61 227 L63 229.4 L66 228.4 L69 226.4 L73 225 L77 223.4 L81 222 L85 220.6 L88 219 L91 219.6 L94 218 L97 216.4 L100 214.6 L101 214.6 L101 248 L32 248 Z" fill="#1a1f2e"/><path d="M46 216.6 L50 217 L54 216.8 L57 218 L59 222 L61 227 L62 232 L58 235 L53 231 L49 224 Z" fill="#4e4f5a" opacity=".8"/><path d="M70 226 L77 223.4 L81 222 L85 220.6 L88 219 L91 219.6 L90 228 L84 232 L76 233 L70 231 Z" fill="#3a3f50" opacity=".7"/><path d="M32 209.6 L35 211 L38 212.4 L42 215 L46 220 L44 230 L38 234 L32 232 Z" fill="#232838"/><path d="M32 234 L45 231 L60 236 L75 234 L90 231 L101 232 L101 248 L32 248 Z" fill="#0c0d16" filter="url(#bl05)"/><rect x="32" y="238" width="70" height="10" fill="#0a0b12"/></g>
<g clip-path="url(#cb1)"><rect x="105.3" y="144.6" width="68.3" height="102.2" fill="url(#gb1)" /><ellipse cx="136" cy="196" rx="22" ry="13" fill="#5e6364" opacity=".6" filter="url(#bl4)"/><path d="M105 178 L112 166 L120 154 L126 150 L122 162 L114 178 L107 190 Z" fill="#5a4e58" opacity=".4" filter="url(#bl2)"/><circle cx="123.6" cy="149.9" r="0.21" fill="#fff" opacity="0.17"/><circle cx="112.8" cy="151.2" r="0.13" fill="#fff" opacity="0.16"/><circle cx="126.6" cy="157.1" r="0.26" fill="#fff" opacity="0.19"/><circle cx="139.5" cy="151.9" r="0.18" fill="#fff" opacity="0.11"/><circle cx="122.4" cy="145.2" r="0.25" fill="#fff" opacity="0.27"/><circle cx="118.2" cy="164.0" r="0.29" fill="#fff" opacity="0.13"/><circle cx="161.2" cy="162.3" r="0.21" fill="#fff" opacity="0.35"/><circle cx="132.1" cy="165.3" r="0.24" fill="#fff" opacity="0.39"/><circle cx="128.7" cy="178.6" r="0.25" fill="#fff" opacity="0.29"/><circle cx="132.9" cy="158.8" r="0.13" fill="#fff" opacity="0.14"/><circle cx="110.1" cy="174.9" r="0.17" fill="#fff" opacity="0.15"/><circle cx="111.1" cy="179.0" r="0.28" fill="#fff" opacity="0.30"/><circle cx="124.6" cy="154.5" r="0.17" fill="#fff" opacity="0.24"/><circle cx="116.1" cy="162.8" r="0.17" fill="#fff" opacity="0.39"/><circle cx="171.7" cy="167.0" r="0.16" fill="#fff" opacity="0.39"/><circle cx="126.4" cy="159.2" r="0.12" fill="#fff" opacity="0.21"/><circle cx="137.7" cy="165.2" r="0.16" fill="#fff" opacity="0.25"/><circle cx="105.6" cy="155.4" r="0.14" fill="#fff" opacity="0.22"/><circle cx="108.1" cy="145.5" r="0.17" fill="#fff" opacity="0.17"/><circle cx="145.3" cy="166.2" r="0.26" fill="#fff" opacity="0.30"/><circle cx="154.2" cy="180.5" r="0.19" fill="#fff" opacity="0.20"/><circle cx="172.6" cy="150.7" r="0.25" fill="#fff" opacity="0.29"/><circle cx="108.3" cy="178.7" r="0.28" fill="#fff" opacity="0.29"/><circle cx="155.4" cy="177.8" r="0.15" fill="#fff" opacity="0.26"/><circle cx="139.7" cy="178.7" r="0.26" fill="#fff" opacity="0.35"/><circle cx="145.2" cy="181.1" r="0.24" fill="#fff" opacity="0.31"/><circle cx="121.0" cy="145.9" r="0.14" fill="#fff" opacity="0.21"/><circle cx="112.5" cy="178.8" r="0.22" fill="#fff" opacity="0.29"/><circle cx="148.1" cy="172.4" r="0.21" fill="#fff" opacity="0.10"/><circle cx="159.8" cy="175.2" r="0.21" fill="#fff" opacity="0.26"/><circle cx="150.3" cy="147.3" r="0.25" fill="#fff" opacity="0.18"/><circle cx="110.4" cy="155.5" r="0.25" fill="#fff" opacity="0.16"/><circle cx="155.8" cy="184.5" r="0.21" fill="#fff" opacity="0.21"/><circle cx="138.0" cy="172.5" r="0.26" fill="#fff" opacity="0.29"/><circle cx="149.2" cy="147.8" r="0.15" fill="#fff" opacity="0.18"/><circle cx="156.1" cy="157.0" r="0.22" fill="#fff" opacity="0.10"/><circle cx="109.4" cy="155.6" r="0.24" fill="#fff" opacity="0.31"/><circle cx="151.5" cy="156.5" r="0.21" fill="#fff" opacity="0.24"/><circle cx="137.2" cy="149.4" r="0.28" fill="#fff" opacity="0.16"/><circle cx="172.1" cy="182.9" r="0.12" fill="#fff" opacity="0.24"/><path d="M105 181 L108 182 L111 185 L115 188.6 L119 192 L123 195.6 L127 198 L131 199.6 L135 201 L138 201.6 L141 200.4 L144 198 L148 196 L152 194.4 L156 192 L160 189.6 L164 186.6 L168 183 L171 180 L174 176.6 L174 248 L105 248 Z" fill="#17120d"/><path d="M144 198 L148 196 L152 194.4 L156 192 L160 189.6 L164 186.6 L168 183 L171 180 L174 176.6 L174 204 L160 208 L148 207 Z" fill="#241d14" opacity=".8"/><path d="M128 199.4 L130 196.8 L132 199 L134 197 L136 200 L138 198 L140 200.4 L141 203 L128 203 Z" fill="#0e0c09"/><rect x="105" y="209.6" width="69" height="4.4" fill="#261f16" opacity=".6" filter="url(#bl05)"/><rect x="105" y="214" width="69" height="35" fill="#0b0a09"/><path d="M124 216 L152 216 L146 230 L138 240 L131 230 Z" fill="#3c4040" opacity=".6" filter="url(#bl2)"/><path d="M105 230 L116 228 L128 236 L140 240 L152 236 L174 228 L174 248 L105 248 Z" fill="#090807" opacity=".85" filter="url(#bl1)"/></g>
<g clip-path="url(#ca2)"><rect x="32.2" y="249.0" width="68.4" height="85.5" fill="url(#ga2)" /><ellipse cx="100" cy="262" rx="22" ry="36" fill="url(#rda2)"/><ellipse cx="32" cy="256" rx="16" ry="24" fill="url(#rda2)"/><path d="M75 247 C72 256 62 262 55 270 C49 277 50 284 54 284" fill="none" stroke="#3ad490" stroke-width="5.5" opacity=".85" filter="url(#bl2)"/><path d="M52 276 C53 270 59 266 65 268" fill="none" stroke="#6aeaa8" stroke-width="3.6" opacity=".85" filter="url(#bl1)"/><path d="M69 247 C72 256 80 266 80 276 C79 284 72 288 68 292" fill="none" stroke="#2fc48a" stroke-width="7" opacity=".75" filter="url(#bl2)"/><path d="M30 281 C36 286 42 291 50 294" fill="none" stroke="#2cba88" stroke-width="5" opacity=".6" filter="url(#bl2)"/><ellipse cx="66" cy="280" rx="16" ry="14" fill="#2aa880" opacity=".3" filter="url(#bl4)"/><path d="M32 297.6 L35 296 L38 297 L41 295.6 L44 296.6 L47 296 L50 297 L54 295 L58 295.6 L61 294.4 L64 293.6 L66 292.8 L68 293.8 L71 294.6 L74 294 L78 295.8 L82 294.8 L86 295.4 L90 294.6 L94 295.4 L98 295.8 L101 297.6 L101 305 L32 305 Z" fill="#0b1216"/><path d="M33 299.6 L38 299 L42 297.6 L46 298.6 L50 299 L54 297.4 L58 298 L62 296.8 L66 296 L70 297 L75 297 L80 298 L84 297 L89 297.6 L94 297.6 L99 298.6 L99 300.4 L88 301.4 L76 300.4 L64 301.6 L52 300.6 L42 301.6 Z" fill="#9fb2b4" opacity=".3"/><rect x="32" y="303.6" width="69" height="4" fill="#a9bcbc" opacity=".75"/><rect x="32" y="305.6" width="69" height=".9" fill="#101a1e" opacity=".7"/><path d="M32 307.6 L101 307.6 L101 313 L98 314.6 L94 314 L90 315 L86 314 L82 315.4 L78 314.4 L74 316 L71 315.6 L68 317.4 L66 318.6 L64 317 L61 316.4 L58 315.4 L54 316 L50 314.4 L46 315.4 L41 315 L38 314.6 L35 315.4 L32 314 Z" fill="#0c161a"/><circle cx="65.9" cy="292.4" r="1.4" fill="#eaff9a" filter="url(#bl05)"/><circle cx="65.9" cy="292" r="3.4" fill="#b8f58a" opacity=".45" filter="url(#bl1)"/><circle cx="65.9" cy="319.2" r="1.2" fill="#d8ff9a" opacity=".9" filter="url(#bl05)"/><ellipse cx="66" cy="323" rx="24" ry="6" fill="#1fb0a6" opacity=".55" filter="url(#bl2)"/></g>
<g clip-path="url(#cb2)"><rect x="105.3" y="249.0" width="68.3" height="44.9" fill="url(#gb2)" /><circle cx="161.3" cy="270.7" r="0.26" fill="#fff" opacity="0.17"/><circle cx="119.6" cy="270.2" r="0.20" fill="#fff" opacity="0.25"/><circle cx="115.0" cy="260.8" r="0.39" fill="#fff" opacity="0.13"/><circle cx="161.3" cy="260.4" r="0.37" fill="#fff" opacity="0.28"/><circle cx="121.1" cy="269.2" r="0.27" fill="#fff" opacity="0.11"/><circle cx="105.5" cy="260.0" r="0.26" fill="#fff" opacity="0.18"/><circle cx="114.9" cy="256.7" r="0.23" fill="#fff" opacity="0.31"/><circle cx="105.4" cy="265.9" r="0.36" fill="#fff" opacity="0.13"/><circle cx="168.6" cy="265.0" r="0.38" fill="#fff" opacity="0.17"/><circle cx="130.7" cy="257.8" r="0.40" fill="#fff" opacity="0.25"/><circle cx="129.9" cy="258.6" r="0.22" fill="#fff" opacity="0.11"/><circle cx="112.2" cy="267.7" r="0.22" fill="#fff" opacity="0.33"/><circle cx="122.3" cy="255.0" r="0.28" fill="#fff" opacity="0.15"/><circle cx="130.8" cy="270.5" r="0.37" fill="#fff" opacity="0.30"/><circle cx="148.4" cy="269.5" r="0.39" fill="#fff" opacity="0.24"/><circle cx="154.4" cy="250.1" r="0.33" fill="#fff" opacity="0.21"/><circle cx="156.7" cy="263.5" r="0.22" fill="#fff" opacity="0.11"/><circle cx="168.6" cy="251.9" r="0.27" fill="#fff" opacity="0.19"/><circle cx="125.6" cy="265.6" r="0.39" fill="#fff" opacity="0.17"/><circle cx="150.1" cy="255.8" r="0.29" fill="#fff" opacity="0.20"/><circle cx="116.7" cy="252.6" r="0.20" fill="#fff" opacity="0.33"/><circle cx="139.3" cy="253.9" r="0.38" fill="#fff" opacity="0.35"/><circle cx="136.0" cy="252.1" r="0.20" fill="#fff" opacity="0.12"/><circle cx="128.7" cy="251.0" r="0.21" fill="#fff" opacity="0.16"/><circle cx="144.2" cy="268.9" r="0.34" fill="#fff" opacity="0.20"/><path d="M105 274 L109 272 L113 273 L118 276 L123 278 L128 280 L134 283 L140 285 L146 286 L146 295 L105 295 Z" fill="#10141b"/><path d="M109 272 L113 273 L118 276 L123 278 L128 280 L124 281 L117 279 L112 276 Z" fill="#39424f" opacity=".7"/><path d="M174 259 L170 263 L166 268 L161 274 L156 279 L151 283 L146 286 L143 288 L174 290 Z" fill="#0e1218"/><path d="M174 262 L170 266 L166 271 L162 277 L158 281 L166 280 L171 274 L174 270 Z" fill="#3a4350" opacity=".6"/><path d="M105 285 L125 283.6 L146 287 L160 286 L174 285 L174 295 L105 295 Z" fill="#1f2731"/></g>
<g clip-path="url(#cb3)"><rect x="105.3" y="296.3" width="68.3" height="45.1" fill="url(#gb3)" /><circle cx="133.6" cy="306.9" r="0.24" fill="#fff" opacity="0.18"/><circle cx="109.5" cy="301.9" r="0.39" fill="#fff" opacity="0.13"/><circle cx="139.7" cy="309.1" r="0.37" fill="#fff" opacity="0.15"/><circle cx="123.8" cy="301.3" r="0.25" fill="#fff" opacity="0.21"/><circle cx="170.5" cy="313.5" r="0.37" fill="#fff" opacity="0.11"/><circle cx="107.5" cy="310.7" r="0.37" fill="#fff" opacity="0.22"/><circle cx="145.4" cy="296.3" r="0.25" fill="#fff" opacity="0.33"/><circle cx="161.7" cy="313.7" r="0.39" fill="#fff" opacity="0.16"/><circle cx="112.7" cy="299.4" r="0.28" fill="#fff" opacity="0.27"/><circle cx="169.6" cy="310.9" r="0.31" fill="#fff" opacity="0.29"/><circle cx="136.5" cy="307.5" r="0.16" fill="#fff" opacity="0.30"/><circle cx="121.2" cy="315.0" r="0.31" fill="#fff" opacity="0.18"/><circle cx="114.0" cy="301.4" r="0.31" fill="#fff" opacity="0.27"/><circle cx="113.0" cy="297.7" r="0.28" fill="#fff" opacity="0.25"/><circle cx="131.8" cy="300.8" r="0.30" fill="#fff" opacity="0.10"/><circle cx="125.9" cy="305.6" r="0.39" fill="#fff" opacity="0.26"/><circle cx="165.7" cy="305.9" r="0.21" fill="#fff" opacity="0.16"/><circle cx="170.9" cy="310.6" r="0.23" fill="#fff" opacity="0.11"/><ellipse cx="134" cy="326" rx="19" ry="7" fill="#d9682c" opacity=".95" filter="url(#bl4)"/><ellipse cx="133.6" cy="326" rx="11" ry="3.4" fill="#ffa868" opacity=".9" filter="url(#bl2)"/><path d="M105 333 L112 331 L118 329 L123 327 L127 325 L130 322.6 L133 321 L136 322.4 L139 324 L143 326.6 L147 327.4 L150 325.4 L153 324.4 L156 326.4 L160 328.6 L165 330.6 L170 332 L174 333 L174 342 L105 342 Z" fill="#0f1218"/><path d="M127 325.4 L130 322.6 L133 321 L136 322.4 L139 324 L143 326.6 L140 328.4 L136 326 L133.6 328.6 L131 326 L128.6 328 Z" fill="#eef0f2"/><path d="M147.4 327.2 L150 325.4 L153 324.4 L156 326.4 L159 328.2 L155.4 328.6 L153 326.8 L150.6 328.6 Z" fill="#e2e5e8"/><path d="M120 329 L127 325.4 L128.6 328 L131 326 L133.6 328.6 L136 326 L140 328.4 L143 326.6 L147.4 327.2 L150.6 328.6 L153 326.8 L155.4 328.6 L160 328.6 L166 331 L150 333 L132 333 Z" fill="#5a5f6a" opacity=".55"/></g>
<g clip-path="url(#ca3)"><rect x="32.2" y="337.0" width="68.4" height="44.4" fill="url(#ga3)" /><path d="M50 337 L62 337 L72 356 L78 372 L62 372 L58 356 Z" fill="#6a5590" opacity=".7" filter="url(#bl2)"/><path d="M55 337 L59 337 L68 356 L72 370 L66 370 L62 354 Z" fill="#d8c0dc" opacity=".6" filter="url(#bl1)"/><ellipse cx="69" cy="369" rx="7" ry="4" fill="#f0b8a0" opacity=".85" filter="url(#bl1)"/><ellipse cx="70" cy="371" rx="14" ry="3.4" fill="#d88a5a" opacity=".6" filter="url(#bl2)"/><ellipse cx="46" cy="368" rx="14" ry="6" fill="#4a3460" opacity=".45" filter="url(#bl2)"/><ellipse cx="90" cy="366" rx="12" ry="6" fill="#3a3a72" opacity=".4" filter="url(#bl2)"/><circle cx="66.3" cy="359.5" r="0.26" fill="#fff" opacity="0.33"/><circle cx="77.8" cy="367.8" r="0.21" fill="#fff" opacity="0.22"/><circle cx="55.3" cy="351.0" r="0.32" fill="#fff" opacity="0.30"/><circle cx="86.7" cy="361.6" r="0.28" fill="#fff" opacity="0.30"/><circle cx="98.5" cy="347.4" r="0.36" fill="#fff" opacity="0.32"/><circle cx="47.3" cy="362.3" r="0.22" fill="#fff" opacity="0.68"/><circle cx="66.1" cy="343.2" r="0.21" fill="#fff" opacity="0.41"/><circle cx="77.7" cy="368.6" r="0.19" fill="#fff" opacity="0.40"/><circle cx="46.8" cy="369.4" r="0.19" fill="#fff" opacity="0.23"/><circle cx="36.3" cy="350.1" r="0.37" fill="#fff" opacity="0.64"/><circle cx="82.3" cy="370.2" r="0.38" fill="#fff" opacity="0.36"/><circle cx="44.9" cy="368.2" r="0.34" fill="#fff" opacity="0.22"/><circle cx="77.6" cy="349.6" r="0.24" fill="#fff" opacity="0.37"/><circle cx="43.8" cy="337.1" r="0.22" fill="#fff" opacity="0.38"/><circle cx="97.6" cy="341.1" r="0.39" fill="#fff" opacity="0.30"/><circle cx="56.6" cy="364.4" r="0.36" fill="#fff" opacity="0.42"/><circle cx="35.6" cy="352.8" r="0.24" fill="#fff" opacity="0.66"/><circle cx="45.4" cy="349.1" r="0.37" fill="#fff" opacity="0.22"/><circle cx="60.3" cy="364.0" r="0.34" fill="#fff" opacity="0.22"/><circle cx="34.6" cy="339.1" r="0.38" fill="#fff" opacity="0.33"/><circle cx="83.3" cy="366.9" r="0.23" fill="#fff" opacity="0.34"/><circle cx="97.7" cy="357.5" r="0.22" fill="#fff" opacity="0.56"/><circle cx="53.8" cy="346.2" r="0.15" fill="#fff" opacity="0.58"/><circle cx="94.9" cy="358.1" r="0.39" fill="#fff" opacity="0.21"/><circle cx="48.2" cy="352.8" r="0.39" fill="#fff" opacity="0.68"/><circle cx="58.6" cy="345.4" r="0.26" fill="#fff" opacity="0.45"/><circle cx="95.7" cy="343.1" r="0.35" fill="#fff" opacity="0.57"/><circle cx="88.5" cy="362.7" r="0.30" fill="#fff" opacity="0.36"/><circle cx="54.1" cy="349.0" r="0.35" fill="#fff" opacity="0.24"/><circle cx="45.7" cy="362.1" r="0.21" fill="#fff" opacity="0.23"/><circle cx="34.5" cy="355.4" r="0.23" fill="#fff" opacity="0.69"/><circle cx="92.6" cy="369.9" r="0.22" fill="#fff" opacity="0.24"/><circle cx="38.8" cy="353.6" r="0.33" fill="#fff" opacity="0.42"/><circle cx="48.2" cy="350.9" r="0.31" fill="#fff" opacity="0.54"/><circle cx="83.4" cy="365.2" r="0.32" fill="#fff" opacity="0.26"/><circle cx="89.7" cy="346.8" r="0.29" fill="#fff" opacity="0.39"/><circle cx="82.7" cy="343.6" r="0.21" fill="#fff" opacity="0.32"/><circle cx="42.7" cy="366.4" r="0.29" fill="#fff" opacity="0.36"/><circle cx="59.3" cy="370.0" r="0.28" fill="#fff" opacity="0.32"/><circle cx="87.5" cy="358.8" r="0.40" fill="#fff" opacity="0.25"/><circle cx="64.7" cy="364.3" r="0.36" fill="#fff" opacity="0.66"/><circle cx="35.0" cy="346.8" r="0.18" fill="#fff" opacity="0.29"/><circle cx="98.8" cy="356.4" r="0.38" fill="#fff" opacity="0.39"/><circle cx="91.4" cy="352.0" r="0.21" fill="#fff" opacity="0.59"/><circle cx="96.9" cy="340.5" r="0.30" fill="#fff" opacity="0.51"/><path d="M32 374 L37 372.6 L42 373.6 L47 372 L52 373 L57 374 L62 374.6 L67 373.6 L72 372 L77 371 L82 372 L87 371 L92 372.4 L97 371.4 L101 372.4 L101 382 L32 382 Z" fill="#14151e"/><path d="M32 376.2 L42 375.2 L52 376.4 L64 377 L76 375 L88 375.2 L101 376 L101 378.8 L32 379 Z" fill="#43455a" opacity=".5"/></g>
<g clip-path="url(#ca4)"><rect x="32.2" y="383.6" width="68.4" height="94.4" fill="url(#ga4)" /><circle cx="47.1" cy="399.3" r="0.15" fill="#fff" opacity="0.15"/><circle cx="49.6" cy="409.1" r="0.24" fill="#fff" opacity="0.15"/><circle cx="33.0" cy="397.5" r="0.24" fill="#fff" opacity="0.15"/><circle cx="53.6" cy="392.2" r="0.26" fill="#fff" opacity="0.24"/><circle cx="36.5" cy="387.9" r="0.19" fill="#fff" opacity="0.24"/><circle cx="75.9" cy="387.5" r="0.15" fill="#fff" opacity="0.27"/><circle cx="60.2" cy="395.6" r="0.18" fill="#fff" opacity="0.34"/><circle cx="53.6" cy="407.7" r="0.18" fill="#fff" opacity="0.20"/><circle cx="91.3" cy="425.9" r="0.19" fill="#fff" opacity="0.15"/><circle cx="82.0" cy="392.3" r="0.12" fill="#fff" opacity="0.33"/><circle cx="61.2" cy="418.4" r="0.19" fill="#fff" opacity="0.32"/><circle cx="63.7" cy="390.5" r="0.12" fill="#fff" opacity="0.24"/><circle cx="76.0" cy="422.2" r="0.14" fill="#fff" opacity="0.26"/><circle cx="57.6" cy="405.0" r="0.15" fill="#fff" opacity="0.17"/><circle cx="67.8" cy="422.9" r="0.14" fill="#fff" opacity="0.22"/><circle cx="87.2" cy="424.7" r="0.16" fill="#fff" opacity="0.13"/><circle cx="96.7" cy="425.0" r="0.21" fill="#fff" opacity="0.11"/><circle cx="95.5" cy="400.1" r="0.28" fill="#fff" opacity="0.26"/><circle cx="88.6" cy="390.4" r="0.26" fill="#fff" opacity="0.16"/><circle cx="59.9" cy="419.6" r="0.27" fill="#fff" opacity="0.15"/><circle cx="47.1" cy="400.6" r="0.21" fill="#fff" opacity="0.20"/><circle cx="40.6" cy="394.1" r="0.25" fill="#fff" opacity="0.32"/><circle cx="35.0" cy="407.5" r="0.26" fill="#fff" opacity="0.11"/><circle cx="89.5" cy="388.6" r="0.23" fill="#fff" opacity="0.24"/><circle cx="75.1" cy="396.6" r="0.20" fill="#fff" opacity="0.25"/><circle cx="61.3" cy="411.6" r="0.20" fill="#fff" opacity="0.21"/><circle cx="33.8" cy="409.9" r="0.21" fill="#fff" opacity="0.16"/><circle cx="84.4" cy="416.7" r="0.20" fill="#fff" opacity="0.14"/><circle cx="64.6" cy="388.1" r="0.14" fill="#fff" opacity="0.21"/><circle cx="38.5" cy="402.4" r="0.21" fill="#fff" opacity="0.11"/><circle cx="75.7" cy="387.1" r="0.25" fill="#fff" opacity="0.29"/><circle cx="67.2" cy="385.9" r="0.21" fill="#fff" opacity="0.19"/><circle cx="97.2" cy="389.4" r="0.27" fill="#fff" opacity="0.35"/><circle cx="82.3" cy="418.2" r="0.15" fill="#fff" opacity="0.35"/><circle cx="65.8" cy="424.2" r="0.28" fill="#fff" opacity="0.14"/><circle cx="86.1" cy="423.1" r="0.13" fill="#fff" opacity="0.19"/><circle cx="83.9" cy="390.3" r="0.28" fill="#fff" opacity="0.17"/><circle cx="88.0" cy="389.7" r="0.21" fill="#fff" opacity="0.33"/><circle cx="46.4" cy="394.8" r="0.21" fill="#fff" opacity="0.18"/><circle cx="34.7" cy="391.3" r="0.15" fill="#fff" opacity="0.33"/><ellipse cx="76" cy="445" rx="30" ry="5" fill="#58c8d8" opacity=".35" filter="url(#bl2)"/><path d="M32 457 L40 455.6 L48 456.4 L55 455 L60 453.4 L63 452 L66 451.6 L69 453 L71 456 L76 457.4 L82 458 L90 457.6 L96 458.4 L101 457.6 L101 478 L32 478 Z" fill="#23445e" opacity=".9"/><path d="M32 463 L42 461 L52 462 L60 457 L64 454 L68 454 L71 458 L78 462 L88 465 L101 466 L101 478 L32 478 Z" fill="#1b3248" opacity=".9"/><path d="M32 471 L50 469 L70 472 L86 469.6 L101 471 L101 478 L32 478 Z" fill="#11202e"/><circle cx="88.4" cy="457" r="4" fill="#f08a3a" opacity=".5" filter="url(#bl1)"/><circle cx="88.4" cy="457" r="1.7" fill="#ffb45a"/></g>
<g clip-path="url(#cb4)"><rect x="105.3" y="343.4" width="68.3" height="121.3" fill="url(#gb4)" /><path d="M105 433 L108 431 L111 430 L114 428.4 L117.6 426.4 L120 428 L123 427.4 L126 428.6 L130 426 L133 427.6 L136 427 L139 428.4 L143 426.8 L146.6 426 L150 428.4 L153 427.6 L156 429.6 L160 430.6 L164 432 L168 433 L171 432.6 L174 433.8 L174 446 L105 446 Z" fill="#6e3029"/><path d="M111 430 L114 428.4 L117.6 426.4 L120 428 L123 427.4 L126 428.6 L130 426 L133 427.6 L136 427 L139 428.4 L143 426.8 L146.6 426 L150 428.4 L153 427.6 L156 429.6 L160 430.6 L157 434 L152 432.6 L148 436 L143 432 L139 436 L134 432.6 L129 436.6 L124 433 L119 436 L114 433 Z" fill="#a84a38" opacity=".85"/><path d="M105 438 L120 437 L135 440 L150 438.6 L165 440 L174 439 L174 450 L105 450 Z" fill="#2f2022" opacity=".9" filter="url(#bl1)"/><rect x="105" y="444" width="69" height="8" fill="#241e20" filter="url(#bl1)"/><g transform="rotate(22 157.7 411.5)"><ellipse cx="157.7" cy="411.5" rx="4.7" ry="5.9" fill="#3e3e40"/><path d="M157.7 405.6 A4.7 5.9 0 0 0 157.7 417.4 A1.6 5.9 0 0 0 157.7 405.6 Z" fill="#cfcbc0"/><circle cx="155.6" cy="410" r="1.1" fill="#a9a69c" opacity=".7"/><circle cx="156.4" cy="414" r=".9" fill="#b0ada3" opacity=".7"/></g></g>
<g clip-path="url(#cb5)"><rect x="105.3" y="467.0" width="68.3" height="11.0" fill="url(#gb5)" /><path d="M105 478 L105 470 L108 468 L110 472 L113 469 L116 474 L120 478 Z" fill="#07142e"/></g></svg><!--/PHOTOS-->

</div>
</body>
</html>
